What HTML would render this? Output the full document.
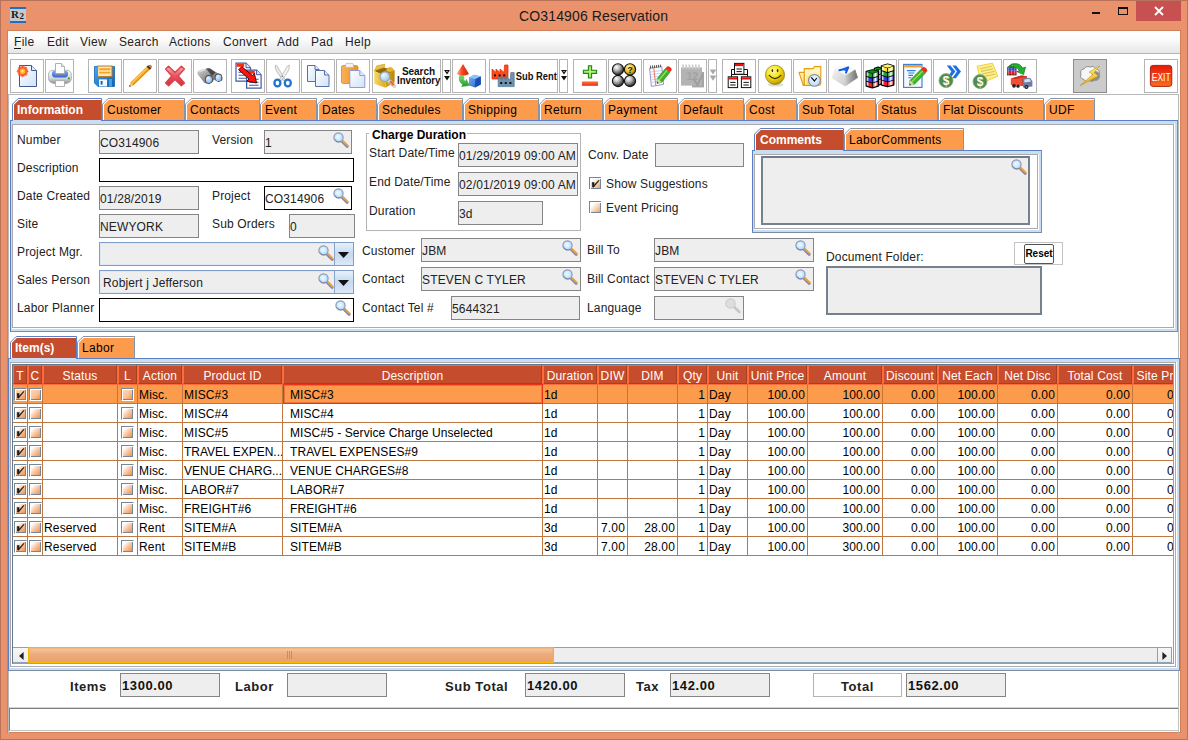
<!DOCTYPE html>
<html><head><meta charset="utf-8"><title>CO314906 Reservation</title>
<style>
html,body{margin:0;padding:0}
body{width:1188px;height:740px;position:relative;overflow:hidden;background:#E9926B;font:12px "Liberation Sans",sans-serif;color:#222}
div{position:absolute;box-sizing:border-box}
svg{position:absolute;overflow:visible}
.t{white-space:nowrap;line-height:14px;height:14px;letter-spacing:.15px}
.f{background:#EEEEEE;border:1px solid #858585;white-space:nowrap;overflow:hidden;line-height:14px;padding:5px 0 0 0;letter-spacing:.15px}
.fw{background:#fff;border:1px solid #000;white-space:nowrap;overflow:hidden;line-height:14px;padding:5px 0 0 0;letter-spacing:.15px}
.b{font-weight:bold}
.tb{background:#fff;border:1px solid #b9b9b9}
.h{color:#fff;text-align:center;background:#C54C2C;border:1px solid #FF6B3B;border-right-color:#A8401F;border-bottom-color:#A8401F;line-height:14px;padding-top:3px;white-space:nowrap;overflow:hidden;height:19px;letter-spacing:.15px}
.c{white-space:nowrap;overflow:hidden;line-height:14px;height:18px;padding-top:3px;color:#000;letter-spacing:.15px}
.r{text-align:right}
.cb{width:12px;height:12px;border:1px solid #8a8f96;border-right-color:#c9ccd0;border-bottom-color:#c9ccd0;background:linear-gradient(135deg,#fff 25%,#fbd9c0 55%,#f4a56e 100%)}
</style></head><body>

<div style="left:0px;top:0px;width:1188px;height:740px;border:1px solid #b9735a;"></div>
<div style="left:7px;top:30px;width:1174px;height:703px;border:1px solid #d2805a;background:#fff"></div>
<div style="left:10px;top:7px;width:16px;height:16px;background:#c6cacf;border-top:2px solid #1d6fc2;border-bottom:2px solid #1d6fc2;font:bold 11px 'Liberation Serif',serif;line-height:11px;color:#1a1a1a;text-align:left;padding-left:1px;letter-spacing:-.5px;overflow:hidden">R<span style="font-size:9px;position:relative;top:1px;left:1px">2</span></div>
<div class="t" style="left:519px;top:7px;font-size:14px;line-height:18px;height:18px;color:#1a1a1a;letter-spacing:.14px">CO314906 Reservation</div>
<div style="left:1092px;top:12px;width:8px;height:2px;background:#111"></div>
<div style="left:1118px;top:7px;width:10px;height:8px;border:1px solid #111;border-top:2px solid #111"></div>
<div style="left:1136px;top:1px;width:45px;height:20px;background:#C75050"></div>
<svg style="left:1154px;top:6px" width="10" height="10" viewBox="0 0 10 10"><path d="M1 1L9 9M9 1L1 9" stroke="#fff" stroke-width="1.8" fill="none"/></svg>
<div style="left:8px;top:31px;width:1172px;height:22px;background:linear-gradient(#fff,#fbfbfb 40%,#e6e6e6)"></div>
<div style="left:8px;top:53px;width:1172px;height:1px;background:#b5b5b5"></div>
<div class="t" style="left:14px;top:35px;letter-spacing:.3px">File</div>
<div class="t" style="left:47px;top:35px;letter-spacing:.3px">Edit</div>
<div class="t" style="left:80px;top:35px;letter-spacing:.3px">View</div>
<div class="t" style="left:119px;top:35px;letter-spacing:.3px">Search</div>
<div class="t" style="left:169px;top:35px;letter-spacing:.3px">Actions</div>
<div class="t" style="left:223px;top:35px;letter-spacing:.3px">Convert</div>
<div class="t" style="left:277px;top:35px;letter-spacing:.3px">Add</div>
<div class="t" style="left:311px;top:35px;letter-spacing:.3px">Pad</div>
<div class="t" style="left:345px;top:35px;letter-spacing:.3px">Help</div>
<div style="left:14px;top:48px;width:7px;height:1px;background:#1a1a1a"></div>
<div style="left:10px;top:59px;width:34px;height:34px;background:#fff;border:1px solid #b4b4b4"><svg style="left:-1px;top:-1px" width="34" height="34" viewBox="0 0 34 34"><defs><linearGradient id="g2" x1="0" y1="0" x2="1" y2="1"><stop offset="0" stop-color="#ffffff"/><stop offset="1" stop-color="#cfe2f7"/></linearGradient></defs><path d="M9.5 6.5H21.5L26.5 11.5V27.5H9.5Z" fill="url(#g2)" stroke="#44598f" stroke-width="1"/><path d="M21.5 6.5V11.5H26.5" fill="#dcecfb" stroke="#44598f" stroke-width="1"/><defs><radialGradient id="g1" cx="0.5" cy="0.5" r="0.5"><stop offset="0" stop-color="#fff27a"/><stop offset="0.45" stop-color="#ffb300"/><stop offset="0.7" stop-color="#ff3b1f"/><stop offset="1" stop-color="rgba(255,80,60,0)"/></radialGradient></defs><circle cx="12.6" cy="12.2" r="6.2" fill="url(#g1)" opacity=".75"/><path d="M19.0 12.2L15.9 13.6L17.1 16.7L14.0 15.5L12.6 18.6L11.2 15.5L8.1 16.7L9.3 13.6L6.2 12.2L9.3 10.8L8.1 7.7L11.2 8.9L12.6 5.8L14.0 8.9L17.1 7.7L15.9 10.8Z" fill="#ff4a2a" opacity=".8"/><circle cx="12.6" cy="12.2" r="2.7" fill="#ffc21a"/><circle cx="12.4" cy="12" r="1.3" fill="#fff27a"/></svg></div>
<div style="left:45px;top:59px;width:29px;height:34px;background:#fff;border:1px solid #b4b4b4"><svg style="left:-1px;top:-1px" width="29" height="34" viewBox="0 0 29 34"><defs><linearGradient id="g3" x1="0" y1="0" x2="0" y2="1"><stop offset="0" stop-color="#fdfdfd"/><stop offset="0.6" stop-color="#d5d8dc"/><stop offset="1" stop-color="#8d9298"/></linearGradient><linearGradient id="g4" x1="0" y1="0" x2="0" y2="1"><stop offset="0" stop-color="#7fb0ff"/><stop offset="1" stop-color="#2f62d8"/></linearGradient></defs><path d="M3.5 16.5Q3.2 11.4 8 11.2H21.6Q26.6 11.4 26.4 16.5V19Q26.4 23.6 21 24.5H9Q3.6 23.6 3.5 19Z" fill="url(#g3)" stroke="#9a9ea4" stroke-width=".7"/><path d="M7 14.4Q7 11.6 10 11.6H20Q23 11.6 23 14.4V15.6Q23 18.4 20 18.4H10Q7 18.4 7 15.6Z" fill="url(#g4)"/><rect x="9.6" y="14.4" width="10.8" height="2" fill="#7d86a0"/><path d="M10.5 14.6V4.5H16.5L19.5 7.5V14.6Z" fill="#fff" stroke="#a8a8a8" stroke-width=".9"/><path d="M16.5 4.5V7.5H19.5" fill="#e4e4e4" stroke="#a8a8a8" stroke-width=".8"/><circle cx="23.8" cy="19.4" r="1.1" fill="#25b02a"/><path d="M10.5 21.6H19.5V27.5H10.5Z" fill="#fff" stroke="#a9a9a9" stroke-width=".9"/></svg></div>
<div style="left:88px;top:59px;width:34px;height:34px;background:#fff;border:1px solid #b4b4b4"><svg style="left:-1px;top:-1px" width="34" height="34" viewBox="0 0 34 34"><defs><linearGradient id="g5" x1="0" y1="0" x2="1" y2="1"><stop offset="0" stop-color="#4aa8ee"/><stop offset="1" stop-color="#0d5fb8"/></linearGradient><linearGradient id="g6" x1="0" y1="0" x2="0" y2="1"><stop offset="0" stop-color="#ffd98a"/><stop offset="1" stop-color="#f7a52a"/></linearGradient></defs><path d="M6.5 7.5H26.5V27.5H10L6.5 24Z" fill="url(#g5)" stroke="#1565b5" stroke-width=".8"/><rect x="9.6" y="7" width="14.4" height="10.6" fill="#ffe7b4" stroke="#b97a22" stroke-width="1"/><path d="M11.2 10.2H22.4M11.2 13.6H22.4" stroke="#f7a226" stroke-width="1.9"/><rect x="11" y="20.4" width="8" height="7" fill="#f3f8fd"/><rect x="12.6" y="22" width="2" height="3.6" fill="#1c62c0"/><rect x="21" y="20" width="3" height="7.5" fill="#5fb4f2" opacity=".7"/></svg></div>
<div style="left:123px;top:59px;width:34px;height:34px;background:#fff;border:1px solid #b4b4b4"><svg style="left:-1px;top:-1px" width="34" height="34" viewBox="0 0 34 34"><path d="M6.4 27.6L11.6 13.4L8 24Z" fill="#cfcfcf" opacity=".7"/><path d="M6.2 27.8L7.4 23.6L24.8 6.6L28 9.6L10.4 26.6Z" fill="#F6A21C"/><path d="M8.4 24.6L25.6 7.6" stroke="#ffd057" stroke-width="1.1"/><path d="M9.8 26L27.2 9" stroke="#d9820c" stroke-width=".8"/><path d="M6.2 27.8L7.4 23.6L10.4 26.6Z" fill="#e9c9a0"/><path d="M6.2 27.8L6.7 26L8 27.3Z" fill="#333"/><path d="M23.6 7.8L26.8 10.8L28.4 9.2L25.2 6.2Z" fill="#3a3a3a"/><path d="M25.2 6.2L28.4 9.2Q29.6 7.6 28.4 6.4Q26.8 5.2 25.2 6.2Z" fill="#f4632a"/></svg></div>
<div style="left:158px;top:59px;width:34px;height:34px;background:#fff;border:1px solid #b4b4b4"><svg style="left:-1px;top:-1px" width="34" height="34" viewBox="0 0 34 34"><defs><linearGradient id="g7" x1="0" y1="0" x2="0" y2="1"><stop offset="0" stop-color="#f9b8b8"/><stop offset="0.45" stop-color="#ea5a62"/><stop offset="1" stop-color="#d62a36"/></linearGradient></defs><path d="M7.6 10L10.6 7.2L17 13.4L23.4 7.2L26.4 10L20.2 17L26.4 24L23.4 26.8L17 20.6L10.6 26.8L7.6 24L13.8 17Z" fill="url(#g7)" stroke="#d8444e" stroke-width="1.4" stroke-linejoin="round"/></svg></div>
<div style="left:193px;top:59px;width:34px;height:34px;background:#fff;border:1px solid #b4b4b4"><svg style="left:-1px;top:-1px" width="34" height="34" viewBox="0 0 34 34"><defs><linearGradient id="g8" x1="0" y1="0" x2="1" y2="1"><stop offset="0" stop-color="#d8d8d8"/><stop offset="0.5" stop-color="#8c8c8c"/><stop offset="1" stop-color="#484848"/></linearGradient><radialGradient id="g9" cx="0.35" cy="0.3" r="0.8"><stop offset="0" stop-color="#e6f3ff"/><stop offset="1" stop-color="#7fb2ea"/></radialGradient></defs><path d="M4.4 15Q4 11.6 8 10.8L13.6 9.4Q16.4 8.8 18.6 10.4L28 16Q30.4 18.6 29 21.6L25.6 23L21 20.4L19.6 23L16 25.2L11.6 24Z" fill="url(#g8)"/><path d="M13 9.6L17 9.2L22.4 13.4L19 17Z" fill="#2e2e2e" opacity=".75"/><path d="M6 12.6L12 10.6" stroke="#ececec" stroke-width="1.3" opacity=".8"/><ellipse cx="15.9" cy="20.3" rx="3.9" ry="4.3" fill="#4a4a4a"/><ellipse cx="15.9" cy="20.6" rx="3.1" ry="3.5" fill="url(#g9)"/><ellipse cx="25.5" cy="18.6" rx="3.7" ry="4.1" fill="#4a4a4a"/><ellipse cx="25.5" cy="18.9" rx="2.9" ry="3.3" fill="url(#g9)"/></svg></div>
<div style="left:231px;top:59px;width:34px;height:34px;background:#fff;border:1px solid #b4b4b4"><svg style="left:-1px;top:-1px" width="34" height="34" viewBox="0 0 34 34"><path d="M5 4.2H15L19.5 8.7V22.2H5Z" fill="#fff" stroke="#3c5aa8" stroke-width="1.2"/><rect x="5.6" y="4.8" width="7.6" height="3" fill="#ff2a12"/><path d="M15 4.2V8.7H19.5" fill="#e8eefc" stroke="#3c5aa8" stroke-width="1"/><path d="M7.5 13.2H17M7.5 16.2H17M7.5 19.2H17" stroke="#3c5aa8" stroke-width="1.1"/><path d="M15.6 11.2H25.6L30.1 15.7V29.2H15.6Z" fill="#fff" stroke="#3c5aa8" stroke-width="1.2"/><rect x="16.2" y="11.799999999999999" width="7.6" height="3" fill="#ff2a12"/><path d="M25.6 11.2V15.7H30.1" fill="#e8eefc" stroke="#3c5aa8" stroke-width="1"/><path d="M18.1 20.2H27.6M18.1 23.2H27.6M18.1 26.2H27.6" stroke="#3c5aa8" stroke-width="1.1"/><path d="M7.6 10.8L10.8 7.6L21.4 16.6L23.4 14.4L25.6 24L15.8 22.2L18 20Z" fill="#f11" stroke="#300" stroke-width=".9" stroke-linejoin="round"/></svg></div>
<div style="left:266px;top:59px;width:34px;height:34px;background:#fff;border:1px solid #b4b4b4"><svg style="left:-1px;top:-1px" width="34" height="34" viewBox="0 0 34 34"><path d="M9.4 6Q8.6 9 11 13L17.6 22L19 20.6L11.4 7.4Z" fill="#e9e9e9" stroke="#a9a9a9" stroke-width=".7"/><path d="M23.2 6Q24 9 21.6 13L15 22L13.6 20.6L21.2 7.4Z" fill="#f4f4f4" stroke="#a9a9a9" stroke-width=".7"/><circle cx="16.4" cy="17.4" r=".8" fill="#888"/><ellipse cx="11.4" cy="24" rx="3" ry="3.4" fill="none" stroke="#1f73d2" stroke-width="2.3"/><ellipse cx="21.8" cy="24" rx="3" ry="3.4" fill="none" stroke="#1f73d2" stroke-width="2.3"/></svg></div>
<div style="left:301px;top:59px;width:34px;height:34px;background:#fff;border:1px solid #b4b4b4"><svg style="left:-1px;top:-1px" width="34" height="34" viewBox="0 0 34 34"><defs><linearGradient id="g10" x1="0" y1="0" x2="1" y2="1"><stop offset="0" stop-color="#ffffff"/><stop offset="1" stop-color="#cfe2f7"/></linearGradient></defs><path d="M6.5 6.5H14.0L18.0 10.5V22.5H6.5Z" fill="url(#g10)" stroke="#5A6FA8" stroke-width="1"/><path d="M14.0 6.5V10.5H18.0" fill="#dcecfb" stroke="#5A6FA8" stroke-width="1"/><defs><linearGradient id="g11" x1="0" y1="0" x2="1" y2="1"><stop offset="0" stop-color="#ffffff"/><stop offset="1" stop-color="#cfe2f7"/></linearGradient></defs><path d="M14.5 11.5H23.5L28.0 16.0V27.5H14.5Z" fill="url(#g11)" stroke="#5A6FA8" stroke-width="1"/><path d="M23.5 11.5V16.0H28.0" fill="#dcecfb" stroke="#5A6FA8" stroke-width="1"/></svg></div>
<div style="left:336px;top:59px;width:34px;height:34px;background:#fff;border:1px solid #b4b4b4"><svg style="left:-1px;top:-1px" width="34" height="34" viewBox="0 0 34 34"><defs><linearGradient id="g12" x1="0" y1="0" x2="1" y2="0"><stop offset="0" stop-color="#f7b25a"/><stop offset="1" stop-color="#ef8f22"/></linearGradient></defs><rect x="5.5" y="6.5" width="16.5" height="18" rx="1.6" fill="url(#g12)" stroke="#d98a2a" stroke-width=".8"/><path d="M9.5 8.4V6Q9.5 4.4 11 4.4H16Q17.5 4.4 17.5 6V8.4Z" fill="#f2f2f2" stroke="#b5b5b5" stroke-width=".7"/><defs><linearGradient id="g13" x1="0" y1="0" x2="1" y2="1"><stop offset="0" stop-color="#ffffff"/><stop offset="1" stop-color="#cfe2f7"/></linearGradient></defs><path d="M13.8 11.5H23.8L28.8 16.5V28.5H13.8Z" fill="url(#g13)" stroke="#8c9be0" stroke-width="1"/><path d="M23.8 11.5V16.5H28.8" fill="#dcecfb" stroke="#8c9be0" stroke-width="1"/></svg></div>
<div style="left:372px;top:59px;width:69px;height:34px;background:#fff;border:1px solid #b4b4b4"><svg style="left:-1px;top:-1px" width="69" height="34" viewBox="0 0 69 34"><defs><linearGradient id="g14" x1="0" y1="0" x2="1" y2="1"><stop offset="0" stop-color="#f6d768"/><stop offset="1" stop-color="#b98612"/></linearGradient><radialGradient id="g15" cx="0.35" cy="0.3" r="0.8"><stop offset="0" stop-color="#f2fbff"/><stop offset="1" stop-color="#8ec5e6"/></radialGradient><linearGradient id="g16" x1="0" y1="0" x2="1" y2="0"><stop offset="0" stop-color="#f7d86a"/><stop offset="1" stop-color="#e0a81c"/></linearGradient><linearGradient id="g17" x1="0" y1="0" x2="1" y2="0"><stop offset="0" stop-color="#d9a21a"/><stop offset="1" stop-color="#b8840e"/></linearGradient></defs><path d="M2.2 12L10.4 8L22.6 11.8L13.6 17Z" fill="#8e6a0c"/><path d="M2.2 12L13.6 17V28.7L2.2 24.8Z" fill="url(#g16)"/><path d="M13.6 17L22.6 11.8V23.3L13.6 28.7Z" fill="url(#g17)"/><path d="M2.2 12L4.8 6.8L12.9 5.1L12.4 8.4L6 10.6Z" fill="#eec040" stroke="#c89212" stroke-width=".5"/><path d="M22.6 11.8L19.4 8.5L16.4 8.8L13.6 11.4L17 13.6Z" fill="#e8b42a" stroke="#c89212" stroke-width=".5"/><path d="M17 21.9L22.4 27.2" stroke="#d4d6dc" stroke-width="3.8" stroke-linecap="round"/><path d="M17.8 22.4L21.6 26.2" stroke="#f25a28" stroke-width="2.8"/><path d="M17.4 23L21.2 26.8" stroke="#f8c43a" stroke-width="1" /><circle cx="12.9" cy="17.7" r="4.9" fill="url(#g15)" stroke="#9aa4b0" stroke-width="1.2"/><text x="30" y="15.8" font-family="Liberation Sans,sans-serif" font-weight="bold" font-size="10" fill="#111" textLength="33" lengthAdjust="spacing">Search</text><text x="25" y="24.8" font-family="Liberation Sans,sans-serif" font-weight="bold" font-size="10" fill="#111" textLength="43.4" lengthAdjust="spacingAndGlyphs">Inventory</text></svg></div>
<div style="left:442px;top:59px;width:9px;height:34px;background:#fff;border:1px solid #b4b4b4"><svg style="left:-1px;top:-1px" width="9" height="34" viewBox="0 0 9 34"><path d="M2 11H8L5 15.4Z" fill="#111"/><path d="M4.2 12H5.8L5 13.2Z" fill="#fff"/><path d="M2 17H8L5 21.6Z" fill="#111"/></svg></div>
<div style="left:452px;top:59px;width:34px;height:34px;background:#fff;border:1px solid #b4b4b4"><svg style="left:-1px;top:-1px" width="34" height="34" viewBox="0 0 34 34"><defs><linearGradient id="g18" x1="0" y1="0" x2="1" y2="0"><stop offset="0" stop-color="#ffb08a"/><stop offset="0.5" stop-color="#f0401a"/><stop offset="1" stop-color="#c62a08"/></linearGradient><linearGradient id="g19" x1="0" y1="0" x2="1" y2="1"><stop offset="0" stop-color="#7db4f5"/><stop offset="1" stop-color="#1e58c8"/></linearGradient><linearGradient id="g20" x1="0" y1="0" x2="0" y2="1"><stop offset="0" stop-color="#7fe06a"/><stop offset="1" stop-color="#1f9a2c"/></linearGradient></defs><path d="M11 5L17 15Q11 18.4 4.6 15Z" fill="url(#g18)"/><path d="M8 16.4L12 18Q10.6 21 13.4 22.6L14.4 20.4L17.4 26.6L9.6 27.6L10.8 25.4Q5.6 22 8 16.4Z" fill="url(#g20)" stroke="#2a9a30" stroke-width=".5"/><path d="M17 18.4L22 15.8L28.8 17.4V25.6L23 28.6L17 26.4Z" fill="url(#g19)"/><path d="M17 18.4L22 15.8L28.8 17.4L23.4 20Z" fill="#8fc0f8"/><path d="M23.4 20L28.8 17.4V25.6L23 28.6Z" fill="#1a4db4"/></svg></div>
<div style="left:489px;top:59px;width:69px;height:34px;background:#fff;border:1px solid #b4b4b4"><svg style="left:-1px;top:-1px" width="69" height="34" viewBox="0 0 69 34"><path d="M3 20V10L7 13.4V10L11 13.4V10L15 13.4L15.6 6H19V20Z" fill="#ff4a1c" stroke="#e02a00" stroke-width=".7"/><rect x="5" y="15.4" width="2" height="2" fill="#111"/><rect x="9.6" y="15.4" width="2" height="2" fill="#111"/><rect x="14.2" y="15.4" width="2" height="2" fill="#111"/><path d="M9.2 27.6V17.6L13.2 21.0V17.6L17.2 21.0V17.6L21.2 21.0L21.799999999999997 13.6H25.2V27.6Z" fill="#6d93b0" stroke="#4c7592" stroke-width=".7"/><rect x="11.2" y="23.0" width="2" height="2" fill="#111"/><rect x="15.799999999999999" y="23.0" width="2" height="2" fill="#111"/><rect x="20.4" y="23.0" width="2" height="2" fill="#111"/><text x="26.8" y="20.8" font-family="Liberation Sans,sans-serif" font-weight="bold" font-size="10" fill="#111" textLength="41" lengthAdjust="spacingAndGlyphs">Sub Rent</text></svg></div>
<div style="left:559px;top:59px;width:9px;height:34px;background:#fff;border:1px solid #b4b4b4"><svg style="left:-1px;top:-1px" width="9" height="34" viewBox="0 0 9 34"><path d="M2 11H8L5 15.4Z" fill="#111"/><path d="M4.2 12H5.8L5 13.2Z" fill="#fff"/><path d="M2 17H8L5 21.6Z" fill="#111"/></svg></div>
<div style="left:573px;top:59px;width:34px;height:34px;background:#fff;border:1px solid #b4b4b4"><svg style="left:-1px;top:-1px" width="34" height="34" viewBox="0 0 34 34"><defs><linearGradient id="g21" x1="0" y1="0" x2="0" y2="1"><stop offset="0" stop-color="#ff7a3a"/><stop offset="1" stop-color="#ee2a12"/></linearGradient></defs><path d="M15.4 6.8H18.6V11.2H23.6V14.4H18.6V19H15.4V14.4H10.4V11.2H15.4Z" fill="#86d444" stroke="#1f8a12" stroke-width="1.1"/><path d="M16.4 7.8H17.6V12.2H22.6V13.4H17.6V18H16.4V13.4H11.4V12.2H16.4Z" fill="#d0f4a0" opacity=".85"/><rect x="9" y="22.4" width="16" height="4.4" fill="url(#g21)"/></svg></div>
<div style="left:608px;top:59px;width:34px;height:34px;background:#fff;border:1px solid #b4b4b4"><svg style="left:-1px;top:-1px" width="34" height="34" viewBox="0 0 34 34"><defs><radialGradient id="g22" cx="0.36" cy="0.3" r="0.8"><stop offset="0" stop-color="#ffffff"/><stop offset="0.35" stop-color="#bdbdbd"/><stop offset="0.75" stop-color="#4c4c4c"/><stop offset="1" stop-color="#0c0c0c"/></radialGradient><radialGradient id="g23" cx="0.38" cy="0.3" r="0.8"><stop offset="0" stop-color="#fff6b0"/><stop offset="0.5" stop-color="#f2c21a"/><stop offset="1" stop-color="#8a6200"/></radialGradient></defs><circle cx="10" cy="10.4" r="5.6" fill="url(#g22)" stroke="#141414" stroke-width="1.1"/><circle cx="22" cy="10.4" r="5.6" fill="url(#g23)" stroke="#141414" stroke-width="1.1"/><circle cx="10" cy="22" r="5.6" fill="url(#g22)" stroke="#141414" stroke-width="1.1"/><circle cx="22" cy="22" r="5.6" fill="url(#g22)" stroke="#141414" stroke-width="1.1"/><text x="22" y="13.6" text-anchor="middle" font-family="Liberation Sans,sans-serif" font-weight="bold" font-size="9" fill="#222">?</text></svg></div>
<div style="left:643px;top:59px;width:34px;height:34px;background:#fff;border:1px solid #b4b4b4"><svg style="left:-1px;top:-1px" width="34" height="34" viewBox="0 0 34 34"><path d="M6.6 9.2L18.8 7.6L20.6 25.4L8.4 27.4Z" fill="#fdfdff" stroke="#8a86c8" stroke-width=".9"/><path d="M8 13L19.4 11.4M8.3 15.6L19.6 14M8.6 18.2L19.9 16.6M8.9 20.8L20.1 19.2M9.1 23.4L20.3 21.8" stroke="#9cc4f0" stroke-width=".7"/><path d="M10.8 9L12.8 26.6" stroke="#f07a5a" stroke-width="1"/><path d="M7.6 9.6V6.6M9.6 9.3V6.4M11.6 9V6.2M13.6 8.8V6M15.6 8.5V5.8M17.6 8.2V5.6" stroke="#555" stroke-width="1"/><path d="M14.0 24.4L18.8 23.2L26.9 13.3L22.4 9.6L14.3 19.5Z" fill="#3fb52a" stroke="#1f7d18" stroke-width=".6"/><path d="M16.1 20.9L24.2 11.1" stroke="#9be36e" stroke-width="1.2"/><path d="M14.0 24.4L18.8 23.2L14.3 19.5Z" fill="#ecd2a2"/><path d="M14.0 24.4L15.7 23.7L14.3 22.6Z" fill="#333"/><path d="M26.9 13.3L28.8 11.0Q28.1 7.3 24.3 7.3L22.4 9.6Z" fill="#e8321e"/></svg></div>
<div style="left:678px;top:59px;width:29px;height:34px;background:#fff;border:1px solid #b4b4b4"><svg style="left:-1px;top:-1px" width="29" height="34" viewBox="0 0 29 34"><path d="M14 13H26V28.4H14Z" fill="#a6a6a6"/><path d="M3 8.4H24V26.6H3Z" fill="#b3b3b3"/><path d="M5 9.6V6.2M8.2 9.6V6.2M11.4 9.6V6.2M14.6 9.6V6.2M17.8 9.6V6.2M21 9.6V6.2" stroke="#cdcdcd" stroke-width="1.7" stroke-linecap="round"/><text x="8.4" y="21" font-family="Liberation Sans,sans-serif" font-weight="bold" font-size="10.5" fill="#a2a2a2">12</text><path d="M15.6 20L19.4 26L24.8 15" stroke="#9c9c9c" stroke-width="1.7" fill="none"/></svg></div>
<div style="left:708px;top:59px;width:9px;height:34px;background:#fff;border:1px solid #b4b4b4"><svg style="left:-1px;top:-1px" width="9" height="34" viewBox="0 0 9 34"><path d="M1.6 10.6H8.4L5 15.6Z" fill="#a9a9a9"/><path d="M1.6 16.6H8.4L5 21.8Z" fill="#a9a9a9"/></svg></div>
<div style="left:722px;top:59px;width:34px;height:34px;background:#fff;border:1px solid #b4b4b4"><svg style="left:-1px;top:-1px" width="34" height="34" viewBox="0 0 34 34"><path d="M12.5 10.5H9.5V18M22 10.5H25.5V18" stroke="#111" stroke-width="1" fill="none"/><path d="M9.5 15.5H25.5" stroke="#111" stroke-width="1"/><rect x="12.5" y="4.4" width="9.4" height="10.8" fill="#fff" stroke="#111" stroke-width="1"/><rect x="13.0" y="4.9" width="8.4" height="2.2" fill="#f20d0d"/><path d="M14.5 10.0H19.9M14.5 12.6H19.9" stroke="#111" stroke-width="1"/><rect x="6.2" y="17.8" width="9.4" height="10.8" fill="#fff" stroke="#111" stroke-width="1"/><rect x="6.7" y="18.3" width="8.4" height="2.2" fill="#f20d0d"/><path d="M8.2 23.4H13.600000000000001M8.2 26.0H13.600000000000001" stroke="#111" stroke-width="1"/><rect x="19.4" y="17.8" width="9.4" height="10.8" fill="#fff" stroke="#111" stroke-width="1"/><rect x="19.9" y="18.3" width="8.4" height="2.2" fill="#f20d0d"/><path d="M21.4 23.4H26.799999999999997M21.4 26.0H26.799999999999997" stroke="#111" stroke-width="1"/></svg></div>
<div style="left:758px;top:59px;width:34px;height:34px;background:#fff;border:1px solid #b4b4b4"><svg style="left:-1px;top:-1px" width="34" height="34" viewBox="0 0 34 34"><defs><radialGradient id="g24" cx="0.4" cy="0.3" r="0.75"><stop offset="0" stop-color="#fffbb0"/><stop offset="0.45" stop-color="#f6e21a"/><stop offset="0.85" stop-color="#c9a800"/><stop offset="1" stop-color="#8a7000"/></radialGradient></defs><ellipse cx="17.6" cy="25.6" rx="8" ry="2" fill="#bba" opacity=".5"/><circle cx="17" cy="15.8" r="9.6" fill="url(#g24)" stroke="#8d7a10" stroke-width=".7"/><ellipse cx="14.4" cy="11.6" rx=".8" ry="1.7" fill="#3a3000"/><ellipse cx="19.6" cy="11.6" rx=".8" ry="1.7" fill="#3a3000"/><path d="M11.2 16.4Q17 23 22.8 16.4" stroke="#3a3000" stroke-width="1.2" fill="none" stroke-linecap="round"/></svg></div>
<div style="left:793px;top:59px;width:34px;height:34px;background:#fff;border:1px solid #b4b4b4"><svg style="left:-1px;top:-1px" width="34" height="34" viewBox="0 0 34 34"><defs><linearGradient id="g25" x1="0" y1="0" x2="0" y2="1"><stop offset="0" stop-color="#fff8c8"/><stop offset="1" stop-color="#f8d64a"/></linearGradient><radialGradient id="g26" cx="0.5" cy="0.4" r="0.7"><stop offset="0" stop-color="#f2faff"/><stop offset="1" stop-color="#a9d4f4"/></radialGradient></defs><path d="M11.2 26.4V9.6H20.4L21.2 7.6H27.8V24Q27.8 26.4 25 26.4Z" fill="#fff6b8" stroke="#e79a18" stroke-width="1.1" stroke-linejoin="round"/><path d="M13.4 11.6H24V14H26.6V26H13.4Z" fill="url(#g25)" opacity=".9"/><path d="M6 13.4H11.2V26.4H10.2Z" fill="url(#g25)" stroke="#e79a18" stroke-width="1.1" stroke-linejoin="round"/><circle cx="21.4" cy="21.4" r="5.9" fill="url(#g26)" stroke="#868a9c" stroke-width="1.1"/><path d="M18.3 18.3L21.4 22L23.8 19" stroke="#111" stroke-width="1.2" fill="none"/></svg></div>
<div style="left:828px;top:59px;width:34px;height:34px;background:#fff;border:1px solid #b4b4b4"><svg style="left:-1px;top:-1px" width="34" height="34" viewBox="0 0 34 34"><defs><linearGradient id="g27" x1="0" y1="0" x2="1" y2="1"><stop offset="0" stop-color="#ffffff"/><stop offset="1" stop-color="#c8c8c8"/></linearGradient><linearGradient id="g28" x1="0" y1="0" x2="1" y2="0"><stop offset="0" stop-color="#cfcfcf"/><stop offset="1" stop-color="#6f6f6f"/></linearGradient><linearGradient id="g29" x1="0" y1="0" x2="1" y2="1"><stop offset="0" stop-color="#f2f2f2"/><stop offset="1" stop-color="#cdcdcd"/></linearGradient></defs><path d="M7 10.4L17.7 15.8L17.2 27L4.1 18.9Z" fill="url(#g29)" stroke="url(#g29)" stroke-width="1" stroke-linejoin="round"/><path d="M17.7 15.8L26.7 10.4L29.4 18.5L17.2 27Z" fill="url(#g28)" stroke="url(#g28)" stroke-width="1" stroke-linejoin="round"/><path d="M7 10.4L15 7L26.7 10.4L17.7 15.8Z" fill="#fbfbfb" stroke="#f1f1f1" stroke-width="1" stroke-linejoin="round"/><path d="M11.4 11.2Q15.4 10.8 20.2 8.4L18 13.6" stroke="#0d5be0" stroke-width="2" fill="none" stroke-linejoin="round" stroke-linecap="round"/><path d="M15.6 10.4L19 11.8" stroke="#0d5be0" stroke-width="1.5"/></svg></div>
<div style="left:863px;top:59px;width:34px;height:34px;background:#fff;border:1px solid #b4b4b4"><svg style="left:-1px;top:-1px" width="34" height="34" viewBox="0 0 34 34"><path d="M11.6 9.6L15.100000000000001 8.4L18.6 9.6V24.6L15.100000000000001 25.8L11.6 24.6Z" fill="#000" stroke="#000" stroke-width="1.8" stroke-linejoin="round"/><path d="M11.6 9.6L15.100000000000001 8.4L18.6 9.6L15.100000000000001 10.799999999999999Z" fill="#0c8a1c"/><defs><linearGradient id="g30" x1="0" y1="0" x2="1" y2="0"><stop offset="0" stop-color="#ffffff"/><stop offset="0.5" stop-color="#1aa02c"/><stop offset="1" stop-color="#1aa02c"/></linearGradient><linearGradient id="g31" x1="0" y1="0" x2="1" y2="0"><stop offset="0" stop-color="#1aa02c"/><stop offset="0.55" stop-color="#ffffff"/><stop offset="1" stop-color="#1aa02c"/></linearGradient></defs><path d="M11.9 10.1L14.700000000000001 11.299999999999999V15.399999999999999L11.9 14.2Z" fill="url(#g30)"/><path d="M15.500000000000002 11.299999999999999L18.3 10.1V14.2L15.500000000000002 15.399999999999999Z" fill="url(#g31)"/><defs><linearGradient id="g32" x1="0" y1="0" x2="1" y2="0"><stop offset="0" stop-color="#ffffff"/><stop offset="0.5" stop-color="#2a3cf0"/><stop offset="1" stop-color="#2a3cf0"/></linearGradient><linearGradient id="g33" x1="0" y1="0" x2="1" y2="0"><stop offset="0" stop-color="#2a3cf0"/><stop offset="0.55" stop-color="#ffffff"/><stop offset="1" stop-color="#2a3cf0"/></linearGradient></defs><path d="M11.9 15.1L14.700000000000001 16.3V20.4L11.9 19.2Z" fill="url(#g32)"/><path d="M15.500000000000002 16.3L18.3 15.1V19.2L15.500000000000002 20.4Z" fill="url(#g33)"/><defs><linearGradient id="g34" x1="0" y1="0" x2="1" y2="0"><stop offset="0" stop-color="#ffffff"/><stop offset="0.5" stop-color="#f02028"/><stop offset="1" stop-color="#f02028"/></linearGradient><linearGradient id="g35" x1="0" y1="0" x2="1" y2="0"><stop offset="0" stop-color="#f02028"/><stop offset="0.55" stop-color="#ffffff"/><stop offset="1" stop-color="#f02028"/></linearGradient></defs><path d="M11.9 20.1L14.700000000000001 21.3V25.4L11.9 24.200000000000003Z" fill="url(#g34)"/><path d="M15.500000000000002 21.3L18.3 20.1V24.200000000000003L15.500000000000002 25.4Z" fill="url(#g35)"/><path d="M3.4 12.6L9.299999999999999 11.0L15.2 12.6V27.0L9.299999999999999 28.6L3.4 27.0Z" fill="#000" stroke="#000" stroke-width="1.8" stroke-linejoin="round"/><path d="M3.4 12.6L9.299999999999999 11.0L15.2 12.6L9.299999999999999 14.2Z" fill="#0a8a18"/><defs><linearGradient id="g36" x1="0" y1="0" x2="1" y2="0"><stop offset="0" stop-color="#ffffff"/><stop offset="0.5" stop-color="#1aa02c"/><stop offset="1" stop-color="#1aa02c"/></linearGradient><linearGradient id="g37" x1="0" y1="0" x2="1" y2="0"><stop offset="0" stop-color="#1aa02c"/><stop offset="0.55" stop-color="#ffffff"/><stop offset="1" stop-color="#1aa02c"/></linearGradient></defs><path d="M3.6999999999999997 13.1L8.899999999999999 14.7V18.599999999999998L3.6999999999999997 17.0Z" fill="url(#g36)"/><path d="M9.7 14.7L14.899999999999999 13.1V17.0L9.7 18.599999999999998Z" fill="url(#g37)"/><defs><linearGradient id="g38" x1="0" y1="0" x2="1" y2="0"><stop offset="0" stop-color="#ffffff"/><stop offset="0.5" stop-color="#2a3cf0"/><stop offset="1" stop-color="#2a3cf0"/></linearGradient><linearGradient id="g39" x1="0" y1="0" x2="1" y2="0"><stop offset="0" stop-color="#2a3cf0"/><stop offset="0.55" stop-color="#ffffff"/><stop offset="1" stop-color="#2a3cf0"/></linearGradient></defs><path d="M3.6999999999999997 17.9L8.899999999999999 19.5V23.4L3.6999999999999997 21.799999999999997Z" fill="url(#g38)"/><path d="M9.7 19.5L14.899999999999999 17.9V21.799999999999997L9.7 23.4Z" fill="url(#g39)"/><defs><linearGradient id="g40" x1="0" y1="0" x2="1" y2="0"><stop offset="0" stop-color="#ffffff"/><stop offset="0.5" stop-color="#f02028"/><stop offset="1" stop-color="#f02028"/></linearGradient><linearGradient id="g41" x1="0" y1="0" x2="1" y2="0"><stop offset="0" stop-color="#f02028"/><stop offset="0.55" stop-color="#ffffff"/><stop offset="1" stop-color="#f02028"/></linearGradient></defs><path d="M3.6999999999999997 22.7L8.899999999999999 24.3V28.2L3.6999999999999997 26.599999999999998Z" fill="url(#g40)"/><path d="M9.7 24.3L14.899999999999999 22.7V26.599999999999998L9.7 28.2Z" fill="url(#g41)"/><path d="M18.6 7L24.6 5.3L30.6 7V25.8L24.6 27.5L18.6 25.8Z" fill="#000" stroke="#000" stroke-width="1.8" stroke-linejoin="round"/><path d="M18.6 7L24.6 5.3L30.6 7L24.6 8.7Z" fill="#fbf27a"/><defs><linearGradient id="g42" x1="0" y1="0" x2="1" y2="0"><stop offset="0" stop-color="#ffffff"/><stop offset="0.5" stop-color="#f4e436"/><stop offset="1" stop-color="#f4e436"/></linearGradient><linearGradient id="g43" x1="0" y1="0" x2="1" y2="0"><stop offset="0" stop-color="#f4e436"/><stop offset="0.55" stop-color="#ffffff"/><stop offset="1" stop-color="#f4e436"/></linearGradient></defs><path d="M18.900000000000002 7.5L24.200000000000003 9.2V13.0L18.900000000000002 11.3Z" fill="url(#g42)"/><path d="M25.0 9.2L30.3 7.5V11.3L25.0 13.0Z" fill="url(#g43)"/><defs><linearGradient id="g44" x1="0" y1="0" x2="1" y2="0"><stop offset="0" stop-color="#ffffff"/><stop offset="0.5" stop-color="#1aa02c"/><stop offset="1" stop-color="#1aa02c"/></linearGradient><linearGradient id="g45" x1="0" y1="0" x2="1" y2="0"><stop offset="0" stop-color="#1aa02c"/><stop offset="0.55" stop-color="#ffffff"/><stop offset="1" stop-color="#1aa02c"/></linearGradient></defs><path d="M18.900000000000002 12.2L24.200000000000003 13.899999999999999V17.7L18.900000000000002 16.0Z" fill="url(#g44)"/><path d="M25.0 13.899999999999999L30.3 12.2V16.0L25.0 17.7Z" fill="url(#g45)"/><defs><linearGradient id="g46" x1="0" y1="0" x2="1" y2="0"><stop offset="0" stop-color="#ffffff"/><stop offset="0.5" stop-color="#2a3cf0"/><stop offset="1" stop-color="#2a3cf0"/></linearGradient><linearGradient id="g47" x1="0" y1="0" x2="1" y2="0"><stop offset="0" stop-color="#2a3cf0"/><stop offset="0.55" stop-color="#ffffff"/><stop offset="1" stop-color="#2a3cf0"/></linearGradient></defs><path d="M18.900000000000002 16.9L24.200000000000003 18.599999999999998V22.4L18.900000000000002 20.7Z" fill="url(#g46)"/><path d="M25.0 18.599999999999998L30.3 16.9V20.7L25.0 22.4Z" fill="url(#g47)"/><defs><linearGradient id="g48" x1="0" y1="0" x2="1" y2="0"><stop offset="0" stop-color="#ffffff"/><stop offset="0.5" stop-color="#f02028"/><stop offset="1" stop-color="#f02028"/></linearGradient><linearGradient id="g49" x1="0" y1="0" x2="1" y2="0"><stop offset="0" stop-color="#f02028"/><stop offset="0.55" stop-color="#ffffff"/><stop offset="1" stop-color="#f02028"/></linearGradient></defs><path d="M18.900000000000002 21.6L24.200000000000003 23.3V27.1L18.900000000000002 25.400000000000002Z" fill="url(#g48)"/><path d="M25.0 23.3L30.3 21.6V25.400000000000002L25.0 27.1Z" fill="url(#g49)"/></svg></div>
<div style="left:898px;top:59px;width:34px;height:34px;background:#fff;border:1px solid #b4b4b4"><svg style="left:-1px;top:-1px" width="34" height="34" viewBox="0 0 34 34"><rect x="5.6" y="5.4" width="18.4" height="23" fill="#f4f9ff" stroke="#2f7fd6" stroke-width="1.1"/><rect x="6.2" y="6" width="17.2" height="2.4" fill="#ff9a2e"/><path d="M9 11.6H17.6M10.4 14H16.4M10.4 16.4H15M10.4 18.8H13.4" stroke="#2f7fd6" stroke-width="1.1"/><path d="M11.4 26.2L16.3 25.4L27.3 14.3L23.1 10.2L12.1 21.3Z" fill="#3fb52a" stroke="#1f7d18" stroke-width=".6"/><path d="M13.8 22.9L24.8 11.8" stroke="#9be36e" stroke-width="1.2"/><path d="M11.4 26.2L16.3 25.4L12.1 21.3Z" fill="#ecd2a2"/><path d="M11.4 26.2L13.2 25.7L11.9 24.4Z" fill="#333"/><path d="M27.3 14.3L29.4 12.1Q29.0 8.4 25.2 8.1L23.1 10.2Z" fill="#e8321e"/></svg></div>
<div style="left:933px;top:59px;width:34px;height:34px;background:#fff;border:1px solid #b4b4b4"><svg style="left:-1px;top:-1px" width="34" height="34" viewBox="0 0 34 34"><path d="M13.8 6.6H17.4L22.4 12.6L17.2 19.2H13.6L18.4 12.6Z" fill="#1f6fe0"/><path d="M19.4 6.6H23L28 12.6L22.8 19.2H19.2L24 12.6Z" fill="#1f6fe0"/><circle cx="13" cy="21.6" r="7" fill="#4f8d4c" stroke="#7eaa78" stroke-width=".8"/><text x="13" y="25.8" text-anchor="middle" font-family="Liberation Sans,sans-serif" font-weight="bold" font-size="12" fill="#fff">$</text></svg></div>
<div style="left:968px;top:59px;width:34px;height:34px;background:#fff;border:1px solid #b4b4b4"><svg style="left:-1px;top:-1px" width="34" height="34" viewBox="0 0 34 34"><path d="M9 7.2L24.4 4.2L29.8 17.2L18 22.2L12.6 20Z" fill="#fdf08a" stroke="#f2c82a" stroke-width=".9"/><path d="M12 9.8L24 7.2M13 12.4L25.2 9.8M14 15L26.4 12.4M15 17.6L27.4 15" stroke="#dcc45a" stroke-width="1.1"/><circle cx="12" cy="22.6" r="7" fill="#4f8d4c" stroke="#7eaa78" stroke-width=".8"/><text x="12" y="26.8" text-anchor="middle" font-family="Liberation Sans,sans-serif" font-weight="bold" font-size="12" fill="#fff">$</text></svg></div>
<div style="left:1003px;top:59px;width:34px;height:34px;background:#fff;border:1px solid #b4b4b4"><svg style="left:-1px;top:-1px" width="34" height="34" viewBox="0 0 34 34"><path d="M4 8.6L9 4.8L15.6 5.4L11 9.4Z" fill="#1d8a2a" stroke="#0c4a12" stroke-width=".5"/><ellipse cx="11" cy="6.2" rx="2" ry=".9" fill="#e8e04a"/><rect x="4" y="9.2" width="9.6" height="2.6" fill="#2a3fd0"/><rect x="4" y="11.8" width="9.6" height="2.4" fill="#e0202a"/><rect x="4" y="14.2" width="9.6" height="2.2" fill="#7a1a1a"/><path d="M5.4 9.2V16.4M8.6 9.2V16.4M11.6 9.2V16.4" stroke="#fff" stroke-width=".6" opacity=".6"/><path d="M10 5Q17 3.6 19.6 9L22.6 8L20.6 15.6L13.6 12.6L16.4 11.4Q14.6 8.2 10.6 8.4Z" fill="#22b030" stroke="#0f6a1a" stroke-width=".6"/><path d="M7.8 19.4L18.4 16.6L24 17.2V26.4L18.6 27L7.8 26Z" fill="#f0503a"/><path d="M7.8 19.4L18.4 16.6L24 17.2L13 20Z" fill="#d02a1a"/><path d="M18.6 19L24 17.2V26.4L18.6 27Z" fill="#c03a2a" opacity=".6"/><path d="M19.6 19.6L27 18.8L29.4 22V27.4L20 28.4Z" fill="#6f7aa6"/><path d="M21.4 20.4L26.4 19.8L28.2 22.6L21.4 23.4Z" fill="#cfe2fa"/><circle cx="11" cy="26.8" r="1.9" fill="#222"/><circle cx="23.4" cy="28" r="2.1" fill="#222"/><circle cx="23.4" cy="28" r=".8" fill="#aaa"/><circle cx="15" cy="27.2" r="1.6" fill="#222"/></svg></div>
<div style="left:1073px;top:59px;width:34px;height:34px;background:#cbcbcb;border:1px solid #8c8c8c"><svg style="left:-1px;top:-1px" width="34" height="34" viewBox="0 0 34 34"><defs><linearGradient id="g50" x1="0" y1="0" x2="0" y2="1"><stop offset="0" stop-color="#fff36a"/><stop offset="1" stop-color="#f2a81a"/></linearGradient></defs><path d="M8 15Q6.4 10.6 11 10Q12.6 6.6 17 8Q21 6.4 22.8 10Q27 10.6 26.4 15.4Q27.4 21.6 21.6 21.4Q19 23.4 16 21.6Q12 23 10.4 20Q6.4 19.6 8 15Z" fill="#f6f6f6" stroke="#6e6e6e" stroke-width=".7"/><path d="M20 12Q26 11.4 26.4 15.4Q27.4 21.6 21.6 21.4Q19 23.2 17 22Z" fill="#8f8f8f"/><path d="M26.5 7L16 13.1L19.9 15.3L7 26.7L25.3 17L21.1 13.6Z" fill="url(#g50)" stroke="#b8860b" stroke-width=".5" stroke-linejoin="round"/></svg></div>
<div style="left:1144px;top:59px;width:34px;height:34px;background:#fff;border:1px solid #b4b4b4"><svg style="left:-1px;top:-1px" width="34" height="34" viewBox="0 0 34 34"><defs><linearGradient id="g51" x1="0" y1="0" x2="0" y2="1"><stop offset="0" stop-color="#e21a0a"/><stop offset="1" stop-color="#ff6a1a"/></linearGradient></defs><rect x="6.4" y="6.4" width="21.4" height="21" rx="2.6" fill="url(#g51)" stroke="#a8150a" stroke-width=".9"/><text x="17.2" y="21.6" text-anchor="middle" font-family="Liberation Sans,sans-serif" font-size="10.5" fill="#fff" textLength="19" lengthAdjust="spacingAndGlyphs">EXIT</text></svg></div>
<div style="left:8px;top:94px;width:1171px;height:640px;border:1px solid #b9b9b9;border-bottom:none"></div>
<div style="left:10px;top:120px;width:1168px;height:212px;background:#C9DEF4;border:1px solid #7B8DA3;border-top-color:#5B7FC7;border-left-color:#5B7FC7"></div>
<div style="left:12px;top:124px;width:1162px;height:204px;background:#fff;border:1px solid #ababab"></div>
<div style="left:1174px;top:124px;width:1px;height:205px;background:#fff"></div>
<div style="left:12px;top:328px;width:1163px;height:1px;background:#fff"></div>
<div style="left:13px;top:120px;width:88px;height:1px;background:#C9DEF4"></div>
<svg style="left:12px;top:98px" width="90" height="22" viewBox="0 0 90 22"><path d="M0 22 V6 L6 0 H90 V22 Z" fill="#fff"/><path d="M2 22 V6.8 L6.8 2 H89 V22 Z" fill="#C54C2C"/><path d="M0.5 22 V6.2 L6.2 0.5 H89.5 V22" fill="none" stroke="#5B7FC7" stroke-width="1"/></svg>
<div class="t" style="left:17px;top:103px;color:#fff;font-weight:bold;letter-spacing:0">Information</div>
<svg style="left:102px;top:98px" width="83" height="22" viewBox="0 0 83 22"><path d="M0 22 V6 L6 0 H83 V22 Z" fill="#fff"/><path d="M2 22 V6.8 L6.8 2 H82 V22 Z" fill="#FD9B4C"/><path d="M0.5 22 V6.2 L6.2 0.5 H82.5 V22" fill="none" stroke="#8495ab" stroke-width="1"/></svg>
<div class="t" style="left:107px;top:103px;color:#000;letter-spacing:.3px">Customer</div>
<svg style="left:185px;top:98px" width="75" height="22" viewBox="0 0 75 22"><path d="M0 22 V6 L6 0 H75 V22 Z" fill="#fff"/><path d="M2 22 V6.8 L6.8 2 H74 V22 Z" fill="#FD9B4C"/><path d="M0.5 22 V6.2 L6.2 0.5 H74.5 V22" fill="none" stroke="#8495ab" stroke-width="1"/></svg>
<div class="t" style="left:190px;top:103px;color:#000;letter-spacing:.3px">Contacts</div>
<svg style="left:260px;top:98px" width="57" height="22" viewBox="0 0 57 22"><path d="M0 22 V6 L6 0 H57 V22 Z" fill="#fff"/><path d="M2 22 V6.8 L6.8 2 H56 V22 Z" fill="#FD9B4C"/><path d="M0.5 22 V6.2 L6.2 0.5 H56.5 V22" fill="none" stroke="#8495ab" stroke-width="1"/></svg>
<div class="t" style="left:265px;top:103px;color:#000;letter-spacing:.3px">Event</div>
<svg style="left:317px;top:98px" width="60" height="22" viewBox="0 0 60 22"><path d="M0 22 V6 L6 0 H60 V22 Z" fill="#fff"/><path d="M2 22 V6.8 L6.8 2 H59 V22 Z" fill="#FD9B4C"/><path d="M0.5 22 V6.2 L6.2 0.5 H59.5 V22" fill="none" stroke="#8495ab" stroke-width="1"/></svg>
<div class="t" style="left:322px;top:103px;color:#000;letter-spacing:.3px">Dates</div>
<svg style="left:377px;top:98px" width="86" height="22" viewBox="0 0 86 22"><path d="M0 22 V6 L6 0 H86 V22 Z" fill="#fff"/><path d="M2 22 V6.8 L6.8 2 H85 V22 Z" fill="#FD9B4C"/><path d="M0.5 22 V6.2 L6.2 0.5 H85.5 V22" fill="none" stroke="#8495ab" stroke-width="1"/></svg>
<div class="t" style="left:382px;top:103px;color:#000;letter-spacing:.3px">Schedules</div>
<svg style="left:463px;top:98px" width="76" height="22" viewBox="0 0 76 22"><path d="M0 22 V6 L6 0 H76 V22 Z" fill="#fff"/><path d="M2 22 V6.8 L6.8 2 H75 V22 Z" fill="#FD9B4C"/><path d="M0.5 22 V6.2 L6.2 0.5 H75.5 V22" fill="none" stroke="#8495ab" stroke-width="1"/></svg>
<div class="t" style="left:468px;top:103px;color:#000;letter-spacing:.3px">Shipping</div>
<svg style="left:539px;top:98px" width="64" height="22" viewBox="0 0 64 22"><path d="M0 22 V6 L6 0 H64 V22 Z" fill="#fff"/><path d="M2 22 V6.8 L6.8 2 H63 V22 Z" fill="#FD9B4C"/><path d="M0.5 22 V6.2 L6.2 0.5 H63.5 V22" fill="none" stroke="#8495ab" stroke-width="1"/></svg>
<div class="t" style="left:544px;top:103px;color:#000;letter-spacing:.3px">Return</div>
<svg style="left:603px;top:98px" width="75" height="22" viewBox="0 0 75 22"><path d="M0 22 V6 L6 0 H75 V22 Z" fill="#fff"/><path d="M2 22 V6.8 L6.8 2 H74 V22 Z" fill="#FD9B4C"/><path d="M0.5 22 V6.2 L6.2 0.5 H74.5 V22" fill="none" stroke="#8495ab" stroke-width="1"/></svg>
<div class="t" style="left:608px;top:103px;color:#000;letter-spacing:.3px">Payment</div>
<svg style="left:678px;top:98px" width="66" height="22" viewBox="0 0 66 22"><path d="M0 22 V6 L6 0 H66 V22 Z" fill="#fff"/><path d="M2 22 V6.8 L6.8 2 H65 V22 Z" fill="#FD9B4C"/><path d="M0.5 22 V6.2 L6.2 0.5 H65.5 V22" fill="none" stroke="#8495ab" stroke-width="1"/></svg>
<div class="t" style="left:683px;top:103px;color:#000;letter-spacing:.3px">Default</div>
<svg style="left:744px;top:98px" width="53" height="22" viewBox="0 0 53 22"><path d="M0 22 V6 L6 0 H53 V22 Z" fill="#fff"/><path d="M2 22 V6.8 L6.8 2 H52 V22 Z" fill="#FD9B4C"/><path d="M0.5 22 V6.2 L6.2 0.5 H52.5 V22" fill="none" stroke="#8495ab" stroke-width="1"/></svg>
<div class="t" style="left:749px;top:103px;color:#000;letter-spacing:.3px">Cost</div>
<svg style="left:797px;top:98px" width="79" height="22" viewBox="0 0 79 22"><path d="M0 22 V6 L6 0 H79 V22 Z" fill="#fff"/><path d="M2 22 V6.8 L6.8 2 H78 V22 Z" fill="#FD9B4C"/><path d="M0.5 22 V6.2 L6.2 0.5 H78.5 V22" fill="none" stroke="#8495ab" stroke-width="1"/></svg>
<div class="t" style="left:802px;top:103px;color:#000;letter-spacing:.3px">Sub Total</div>
<svg style="left:876px;top:98px" width="62" height="22" viewBox="0 0 62 22"><path d="M0 22 V6 L6 0 H62 V22 Z" fill="#fff"/><path d="M2 22 V6.8 L6.8 2 H61 V22 Z" fill="#FD9B4C"/><path d="M0.5 22 V6.2 L6.2 0.5 H61.5 V22" fill="none" stroke="#8495ab" stroke-width="1"/></svg>
<div class="t" style="left:881px;top:103px;color:#000;letter-spacing:.3px">Status</div>
<svg style="left:938px;top:98px" width="106" height="22" viewBox="0 0 106 22"><path d="M0 22 V6 L6 0 H106 V22 Z" fill="#fff"/><path d="M2 22 V6.8 L6.8 2 H105 V22 Z" fill="#FD9B4C"/><path d="M0.5 22 V6.2 L6.2 0.5 H105.5 V22" fill="none" stroke="#8495ab" stroke-width="1"/></svg>
<div class="t" style="left:943px;top:103px;color:#000;letter-spacing:.3px">Flat Discounts</div>
<svg style="left:1044px;top:98px" width="51" height="22" viewBox="0 0 51 22"><path d="M0 22 V6 L6 0 H51 V22 Z" fill="#fff"/><path d="M2 22 V6.8 L6.8 2 H50 V22 Z" fill="#FD9B4C"/><path d="M0.5 22 V6.2 L6.2 0.5 H50.5 V22" fill="none" stroke="#8495ab" stroke-width="1"/></svg>
<div class="t" style="left:1049px;top:103px;color:#000;letter-spacing:.3px">UDF</div>
<div class="t" style="left:17px;top:133px;">Number</div>
<div class="t" style="left:17px;top:161px;">Description</div>
<div class="t" style="left:17px;top:189px;">Date Created</div>
<div class="t" style="left:17px;top:217px;">Site</div>
<div class="t" style="left:17px;top:245px;">Project Mgr.</div>
<div class="t" style="left:17px;top:273px;">Sales Person</div>
<div class="t" style="left:17px;top:301px;">Labor Planner</div>
<div class="f" style="left:99px;top:130px;width:100px;height:24px;">CO314906</div>
<div class="fw" style="left:99px;top:158px;width:255px;height:24px;"></div>
<div class="f" style="left:99px;top:186px;width:100px;height:24px;">01/28/2019</div>
<div class="f" style="left:99px;top:214px;width:100px;height:24px;">NEWYORK</div>
<div class="t" style="left:212px;top:133px;">Version</div>
<div class="f" style="left:264px;top:130px;width:88px;height:24px;">1</div>
<svg style="left:333px;top:132px" width="16" height="16" viewBox="0 0 16 16"><defs><radialGradient id="mg" cx=".45" cy=".45" r=".6"><stop offset="0" stop-color="#f6fcff"/><stop offset=".55" stop-color="#c6eaff"/><stop offset="1" stop-color="#a2d4f8"/></radialGradient></defs><path d="M9.2 9.4L14.2 14.4" stroke="#7f86b0" stroke-width="2.8" stroke-linecap="round"/><path d="M10 9L14.8 13.6" stroke="#F5A132" stroke-width="1.9" stroke-linecap="round"/><circle cx="5.5" cy="5.4" r="4.6" fill="url(#mg)" stroke="#9496b8" stroke-width="1.2"/><path d="M2 7.4A4.2 4.2 0 0 0 8 9.4" stroke="#6f7290" stroke-width=".8" fill="none"/></svg>
<div class="t" style="left:212px;top:189px;">Project</div>
<div class="fw" style="left:264px;top:186px;width:88px;height:24px;">CO314906</div>
<svg style="left:333px;top:188px" width="16" height="16" viewBox="0 0 16 16"><defs><radialGradient id="mg" cx=".45" cy=".45" r=".6"><stop offset="0" stop-color="#f6fcff"/><stop offset=".55" stop-color="#c6eaff"/><stop offset="1" stop-color="#a2d4f8"/></radialGradient></defs><path d="M9.2 9.4L14.2 14.4" stroke="#7f86b0" stroke-width="2.8" stroke-linecap="round"/><path d="M10 9L14.8 13.6" stroke="#F5A132" stroke-width="1.9" stroke-linecap="round"/><circle cx="5.5" cy="5.4" r="4.6" fill="url(#mg)" stroke="#9496b8" stroke-width="1.2"/><path d="M2 7.4A4.2 4.2 0 0 0 8 9.4" stroke="#6f7290" stroke-width=".8" fill="none"/></svg>
<div class="t" style="left:212px;top:217px;">Sub Orders</div>
<div class="f" style="left:289px;top:214px;width:66px;height:24px;">0</div>
<div style="left:99px;top:242px;width:255px;height:24px;background:#EEEEEE;border:1px solid #7F9DC9;box-shadow:inset 0 0 0 1px #dfe8f4;line-height:14px;padding:5px 0 0 3px;white-space:nowrap;letter-spacing:.15px"></div>
<div style="left:334px;top:243px;width:19px;height:22px;background:linear-gradient(#e8f1fb,#c4d9f0 50%,#dce9f7);border-left:1px solid #8aa4c8"></div>
<svg style="left:338px;top:252px" width="11" height="6" viewBox="0 0 11 6"><path d="M0 0H11L5.5 6Z" fill="#111"/></svg>
<svg style="left:318px;top:245px" width="16" height="16" viewBox="0 0 16 16"><defs><radialGradient id="mg" cx=".45" cy=".45" r=".6"><stop offset="0" stop-color="#f6fcff"/><stop offset=".55" stop-color="#c6eaff"/><stop offset="1" stop-color="#a2d4f8"/></radialGradient></defs><path d="M9.2 9.4L14.2 14.4" stroke="#7f86b0" stroke-width="2.8" stroke-linecap="round"/><path d="M10 9L14.8 13.6" stroke="#F5A132" stroke-width="1.9" stroke-linecap="round"/><circle cx="5.5" cy="5.4" r="4.6" fill="url(#mg)" stroke="#9496b8" stroke-width="1.2"/><path d="M2 7.4A4.2 4.2 0 0 0 8 9.4" stroke="#6f7290" stroke-width=".8" fill="none"/></svg>
<div style="left:99px;top:270px;width:255px;height:24px;background:#EEEEEE;border:1px solid #7F9DC9;box-shadow:inset 0 0 0 1px #dfe8f4;line-height:14px;padding:5px 0 0 3px;white-space:nowrap;letter-spacing:.15px">Robjert j Jefferson</div>
<div style="left:334px;top:271px;width:19px;height:22px;background:linear-gradient(#e8f1fb,#c4d9f0 50%,#dce9f7);border-left:1px solid #8aa4c8"></div>
<svg style="left:338px;top:280px" width="11" height="6" viewBox="0 0 11 6"><path d="M0 0H11L5.5 6Z" fill="#111"/></svg>
<svg style="left:318px;top:273px" width="16" height="16" viewBox="0 0 16 16"><defs><radialGradient id="mg" cx=".45" cy=".45" r=".6"><stop offset="0" stop-color="#f6fcff"/><stop offset=".55" stop-color="#c6eaff"/><stop offset="1" stop-color="#a2d4f8"/></radialGradient></defs><path d="M9.2 9.4L14.2 14.4" stroke="#7f86b0" stroke-width="2.8" stroke-linecap="round"/><path d="M10 9L14.8 13.6" stroke="#F5A132" stroke-width="1.9" stroke-linecap="round"/><circle cx="5.5" cy="5.4" r="4.6" fill="url(#mg)" stroke="#9496b8" stroke-width="1.2"/><path d="M2 7.4A4.2 4.2 0 0 0 8 9.4" stroke="#6f7290" stroke-width=".8" fill="none"/></svg>
<div class="fw" style="left:99px;top:298px;width:255px;height:24px;"></div>
<svg style="left:335px;top:300px" width="16" height="16" viewBox="0 0 16 16"><defs><radialGradient id="mg" cx=".45" cy=".45" r=".6"><stop offset="0" stop-color="#f6fcff"/><stop offset=".55" stop-color="#c6eaff"/><stop offset="1" stop-color="#a2d4f8"/></radialGradient></defs><path d="M9.2 9.4L14.2 14.4" stroke="#7f86b0" stroke-width="2.8" stroke-linecap="round"/><path d="M10 9L14.8 13.6" stroke="#F5A132" stroke-width="1.9" stroke-linecap="round"/><circle cx="5.5" cy="5.4" r="4.6" fill="url(#mg)" stroke="#9496b8" stroke-width="1.2"/><path d="M2 7.4A4.2 4.2 0 0 0 8 9.4" stroke="#6f7290" stroke-width=".8" fill="none"/></svg>
<div style="left:366px;top:133px;width:215px;height:98px;border:1px solid #b4b4b4"></div>
<div style="left:369px;top:128px;width:98px;height:14px;background:#fff"></div>
<div class="t" style="left:372px;top:128px;font-weight:bold;color:#000;letter-spacing:0">Charge Duration</div>
<div class="t" style="left:369px;top:146px;">Start Date/Time</div>
<div class="f" style="left:458px;top:143px;width:120px;height:24px;">01/29/2019 09:00 AM</div>
<div class="t" style="left:369px;top:175px;">End Date/Time</div>
<div class="f" style="left:458px;top:172px;width:120px;height:24px;">02/01/2019 09:00 AM</div>
<div class="t" style="left:369px;top:204px;">Duration</div>
<div class="f" style="left:458px;top:201px;width:85px;height:24px;">3d</div>
<div class="t" style="left:588px;top:148px;">Conv. Date</div>
<div class="f" style="left:655px;top:143px;width:89px;height:24px;"></div>
<div style="left:589px;top:177px;width:12px;height:12px;background:#fff;border-left:1px solid #73879c;border-top:1px solid #73879c"><div style="left:1px;top:1px;width:10px;height:10px;border-right:1px solid #73879c;border-bottom:1px solid #73879c;background:linear-gradient(135deg,#fff 18%,#fbd3b4 58%,#f2a266 100%)"></div></div>
<svg style="left:589px;top:177px" width="13" height="13" viewBox="0 0 13 13"><path d="M3.2 5.4L5.2 5.6L4.8 8.4L9.6 3.2L10 3.8L4.6 10.2L3.4 10Z" fill="#151515" stroke="#151515" stroke-width=".5" stroke-linejoin="round"/></svg>
<div class="t" style="left:606px;top:177px;">Show Suggestions</div>
<div style="left:589px;top:201px;width:12px;height:12px;background:#fff;border-left:1px solid #73879c;border-top:1px solid #73879c"><div style="left:1px;top:1px;width:10px;height:10px;border-right:1px solid #73879c;border-bottom:1px solid #73879c;background:linear-gradient(135deg,#fff 18%,#fbd3b4 58%,#f2a266 100%)"></div></div>
<div class="t" style="left:606px;top:201px;">Event Pricing</div>
<div class="t" style="left:362px;top:244px;">Customer</div>
<div class="f" style="left:421px;top:238px;width:160px;height:24px;">JBM</div>
<svg style="left:562px;top:240px" width="16" height="16" viewBox="0 0 16 16"><defs><radialGradient id="mg" cx=".45" cy=".45" r=".6"><stop offset="0" stop-color="#f6fcff"/><stop offset=".55" stop-color="#c6eaff"/><stop offset="1" stop-color="#a2d4f8"/></radialGradient></defs><path d="M9.2 9.4L14.2 14.4" stroke="#7f86b0" stroke-width="2.8" stroke-linecap="round"/><path d="M10 9L14.8 13.6" stroke="#F5A132" stroke-width="1.9" stroke-linecap="round"/><circle cx="5.5" cy="5.4" r="4.6" fill="url(#mg)" stroke="#9496b8" stroke-width="1.2"/><path d="M2 7.4A4.2 4.2 0 0 0 8 9.4" stroke="#6f7290" stroke-width=".8" fill="none"/></svg>
<div class="t" style="left:362px;top:272px;">Contact</div>
<div class="f" style="left:421px;top:267px;width:160px;height:24px;">STEVEN C TYLER</div>
<svg style="left:562px;top:269px" width="16" height="16" viewBox="0 0 16 16"><defs><radialGradient id="mg" cx=".45" cy=".45" r=".6"><stop offset="0" stop-color="#f6fcff"/><stop offset=".55" stop-color="#c6eaff"/><stop offset="1" stop-color="#a2d4f8"/></radialGradient></defs><path d="M9.2 9.4L14.2 14.4" stroke="#7f86b0" stroke-width="2.8" stroke-linecap="round"/><path d="M10 9L14.8 13.6" stroke="#F5A132" stroke-width="1.9" stroke-linecap="round"/><circle cx="5.5" cy="5.4" r="4.6" fill="url(#mg)" stroke="#9496b8" stroke-width="1.2"/><path d="M2 7.4A4.2 4.2 0 0 0 8 9.4" stroke="#6f7290" stroke-width=".8" fill="none"/></svg>
<div class="t" style="left:362px;top:301px;">Contact Tel #</div>
<div class="f" style="left:451px;top:296px;width:129px;height:24px;">5644321</div>
<div class="t" style="left:587px;top:243px;">Bill To</div>
<div class="f" style="left:654px;top:238px;width:160px;height:24px;">JBM</div>
<svg style="left:795px;top:240px" width="16" height="16" viewBox="0 0 16 16"><defs><radialGradient id="mg" cx=".45" cy=".45" r=".6"><stop offset="0" stop-color="#f6fcff"/><stop offset=".55" stop-color="#c6eaff"/><stop offset="1" stop-color="#a2d4f8"/></radialGradient></defs><path d="M9.2 9.4L14.2 14.4" stroke="#7f86b0" stroke-width="2.8" stroke-linecap="round"/><path d="M10 9L14.8 13.6" stroke="#F5A132" stroke-width="1.9" stroke-linecap="round"/><circle cx="5.5" cy="5.4" r="4.6" fill="url(#mg)" stroke="#9496b8" stroke-width="1.2"/><path d="M2 7.4A4.2 4.2 0 0 0 8 9.4" stroke="#6f7290" stroke-width=".8" fill="none"/></svg>
<div class="t" style="left:587px;top:272px;">Bill Contact</div>
<div class="f" style="left:654px;top:267px;width:160px;height:24px;">STEVEN C TYLER</div>
<svg style="left:795px;top:269px" width="16" height="16" viewBox="0 0 16 16"><defs><radialGradient id="mg" cx=".45" cy=".45" r=".6"><stop offset="0" stop-color="#f6fcff"/><stop offset=".55" stop-color="#c6eaff"/><stop offset="1" stop-color="#a2d4f8"/></radialGradient></defs><path d="M9.2 9.4L14.2 14.4" stroke="#7f86b0" stroke-width="2.8" stroke-linecap="round"/><path d="M10 9L14.8 13.6" stroke="#F5A132" stroke-width="1.9" stroke-linecap="round"/><circle cx="5.5" cy="5.4" r="4.6" fill="url(#mg)" stroke="#9496b8" stroke-width="1.2"/><path d="M2 7.4A4.2 4.2 0 0 0 8 9.4" stroke="#6f7290" stroke-width=".8" fill="none"/></svg>
<div class="t" style="left:587px;top:301px;">Language</div>
<div class="f" style="left:654px;top:296px;width:90px;height:24px;"></div>
<svg style="left:725px;top:298px" width="16" height="16" viewBox="0 0 16 16"><path d="M9.4 9.2L14.4 14" stroke="#c6c6c6" stroke-width="2.6" stroke-linecap="round"/><circle cx="5.5" cy="5.4" r="4.6" fill="#dedede" stroke="#cbcbcb" stroke-width="1.3"/></svg>
<div style="left:752px;top:150px;width:290px;height:83px;background:#C9DEF4;border:1px solid #7B8DA3;border-top-color:#5B7FC7;border-left-color:#5B7FC7"></div>
<div style="left:754px;top:154px;width:284px;height:75px;background:#fff;border:1px solid #ababab"></div>
<div style="left:1038px;top:154px;width:1px;height:76px;background:#fff"></div>
<div style="left:754px;top:229px;width:285px;height:1px;background:#fff"></div>
<div style="left:755px;top:150px;width:88px;height:1px;background:#C9DEF4"></div>
<svg style="left:754px;top:128px" width="90" height="22" viewBox="0 0 90 22"><path d="M0 22 V6 L6 0 H90 V22 Z" fill="#fff"/><path d="M2 22 V6.8 L6.8 2 H89 V22 Z" fill="#C54C2C"/><path d="M0.5 22 V6.2 L6.2 0.5 H89.5 V22" fill="none" stroke="#5B7FC7" stroke-width="1"/></svg>
<div class="t" style="left:760px;top:133px;color:#fff;font-weight:bold;letter-spacing:0">Comments</div>
<svg style="left:844px;top:128px" width="120" height="22" viewBox="0 0 120 22"><path d="M0 22 V6 L6 0 H120 V22 Z" fill="#fff"/><path d="M2 22 V6.8 L6.8 2 H119 V22 Z" fill="#FD9B4C"/><path d="M0.5 22 V6.2 L6.2 0.5 H119.5 V22" fill="none" stroke="#8495ab" stroke-width="1"/></svg>
<div class="t" style="left:849px;top:133px;color:#000;letter-spacing:.3px">LaborComments</div>
<div style="left:761px;top:156px;width:269px;height:69px;background:#EEEEEE;border:2px solid #76818E;border-top-color:#6F7B88"></div>
<svg style="left:1011px;top:159px" width="16" height="16" viewBox="0 0 16 16"><defs><radialGradient id="mg" cx=".45" cy=".45" r=".6"><stop offset="0" stop-color="#f6fcff"/><stop offset=".55" stop-color="#c6eaff"/><stop offset="1" stop-color="#a2d4f8"/></radialGradient></defs><path d="M9.2 9.4L14.2 14.4" stroke="#7f86b0" stroke-width="2.8" stroke-linecap="round"/><path d="M10 9L14.8 13.6" stroke="#F5A132" stroke-width="1.9" stroke-linecap="round"/><circle cx="5.5" cy="5.4" r="4.6" fill="url(#mg)" stroke="#9496b8" stroke-width="1.2"/><path d="M2 7.4A4.2 4.2 0 0 0 8 9.4" stroke="#6f7290" stroke-width=".8" fill="none"/></svg>
<div class="t" style="left:826px;top:250px;">Document Folder:</div>
<div style="left:826px;top:266px;width:216px;height:49px;background:#EEEEEE;border:2px solid #76818E"></div>
<div style="left:1014px;top:242px;width:49px;height:23px;background:#fff;border:1px solid #c4c4c4"></div>
<div style="left:1024px;top:244px;width:30px;height:20px;background:#fff;border:1px solid #555;border-radius:2px;font:bold 10px 'Liberation Sans',sans-serif;line-height:18px;text-align:center;color:#000;letter-spacing:0">Reset</div>
<div style="left:8px;top:358px;width:1172px;height:313px;background:#C9DEF4;border:1px solid #7B8DA3;border-top-color:#5B7FC7;border-left-color:#5B7FC7"></div>
<div style="left:10px;top:362px;width:1166px;height:305px;background:#fff;border:1px solid #ababab"></div>
<div style="left:1176px;top:362px;width:1px;height:306px;background:#fff"></div>
<div style="left:10px;top:667px;width:1167px;height:1px;background:#fff"></div>
<div style="left:11px;top:358px;width:65px;height:1px;background:#C9DEF4"></div>
<svg style="left:10px;top:336px" width="67" height="22" viewBox="0 0 67 22"><path d="M0 22 V6 L6 0 H67 V22 Z" fill="#fff"/><path d="M2 22 V6.8 L6.8 2 H66 V22 Z" fill="#C54C2C"/><path d="M0.5 22 V6.2 L6.2 0.5 H66.5 V22" fill="none" stroke="#5B7FC7" stroke-width="1"/></svg>
<div class="t" style="left:15px;top:341px;color:#fff;font-weight:bold;letter-spacing:0">Item(s)</div>
<svg style="left:77px;top:336px" width="58" height="22" viewBox="0 0 58 22"><path d="M0 22 V6 L6 0 H58 V22 Z" fill="#fff"/><path d="M2 22 V6.8 L6.8 2 H57 V22 Z" fill="#FD9B4C"/><path d="M0.5 22 V6.2 L6.2 0.5 H57.5 V22" fill="none" stroke="#8495ab" stroke-width="1"/></svg>
<div class="t" style="left:82px;top:341px;color:#000;letter-spacing:.3px">Labor</div>
<div style="left:12px;top:364px;width:1162px;height:300px;border:1px solid #66788c;border-right-color:#8DA2B8;border-bottom-color:#8DA2B8;background:#fff"></div>
<div style="left:13px;top:365px;width:1160px;height:282px;overflow:hidden">
<div style="left:0px;top:0px;width:1160px;height:20px;background:#FF6B3B"></div>
<div class="h" style="left:0px;top:0;width:14px;">T</div>
<div class="h" style="left:15px;top:0;width:14px;">C</div>
<div class="h" style="left:30px;top:0;width:74px;">Status</div>
<div class="h" style="left:105px;top:0;width:19px;">L</div>
<div class="h" style="left:125px;top:0;width:44px;">Action</div>
<div class="h" style="left:170px;top:0;width:99px;">Product ID</div>
<div class="h" style="left:270px;top:0;width:259px;">Description</div>
<div class="h" style="left:530px;top:0;width:54px;">Duration</div>
<div class="h" style="left:585px;top:0;width:29px;">DIW</div>
<div class="h" style="left:615px;top:0;width:49px;">DIM</div>
<div class="h" style="left:665px;top:0;width:29px;">Qty</div>
<div class="h" style="left:695px;top:0;width:39px;">Unit</div>
<div class="h" style="left:735px;top:0;width:59px;">Unit Price</div>
<div class="h" style="left:795px;top:0;width:74px;">Amount</div>
<div class="h" style="left:870px;top:0;width:54px;">Discount</div>
<div class="h" style="left:925px;top:0;width:59px;">Net Each</div>
<div class="h" style="left:985px;top:0;width:59px;">Net Disc</div>
<div class="h" style="left:1045px;top:0;width:74px;">Total Cost</div>
<div class="h" style="left:1120px;top:0;width:60px;">Site Price</div>
<div style="left:0px;top:20px;width:1160px;height:18px;background:#FD9B4C"></div>
<div style="left:0px;top:38px;width:1160px;height:1px;background:#BF7741"></div>
<div class="c" style="left:126px;top:20px;width:43px;">Misc.</div>
<div class="c" style="left:171px;top:20px;width:98px;">MISC#3</div>
<div class="c" style="left:277px;top:20px;width:252px;letter-spacing:.08px;">MISC#3</div>
<div class="c" style="left:531px;top:20px;width:53px;">1d</div>
<div class="c r" style="left:665px;top:20px;width:27px;">1</div>
<div class="c" style="left:696px;top:20px;width:38px;">Day</div>
<div class="c r" style="left:735px;top:20px;width:57px;">100.00</div>
<div class="c r" style="left:795px;top:20px;width:72px;">100.00</div>
<div class="c r" style="left:870px;top:20px;width:52px;">0.00</div>
<div class="c r" style="left:925px;top:20px;width:57px;">100.00</div>
<div class="c r" style="left:985px;top:20px;width:57px;">0.00</div>
<div class="c r" style="left:1045px;top:20px;width:72px;">0.00</div>
<div class="c r" style="left:1120px;top:20px;width:58px;">0.00</div>
<div style="left:1px;top:23px;width:13px;height:13px;background:#fff;border:1px solid #73879c;border-right-color:#fff;border-bottom-color:#fff"><div style="left:1px;top:1px;width:10px;height:10px;border-right:1px solid #73879c;border-bottom:1px solid #73879c;background:linear-gradient(135deg,#fcd3ae 12%,#f9c29a 55%,#f0924a 100%)"></div></div>
<div style="left:16px;top:23px;width:13px;height:13px;background:#fff;border:1px solid #73879c;border-right-color:#fff;border-bottom-color:#fff"><div style="left:1px;top:1px;width:10px;height:10px;border-right:1px solid #73879c;border-bottom:1px solid #73879c;background:linear-gradient(135deg,#fcd3ae 12%,#f9c29a 55%,#f0924a 100%)"></div></div>
<div style="left:108px;top:23px;width:13px;height:13px;background:#fff;border:1px solid #73879c;border-right-color:#fff;border-bottom-color:#fff"><div style="left:1px;top:1px;width:10px;height:10px;border-right:1px solid #73879c;border-bottom:1px solid #73879c;background:linear-gradient(135deg,#fcd3ae 12%,#f9c29a 55%,#f0924a 100%)"></div></div>
<svg style="left:1px;top:23px" width="13" height="13" viewBox="0 0 13 13"><path d="M3.2 5.4L5.2 5.6L4.8 8.4L9.6 3.2L10 3.8L4.6 10.2L3.4 10Z" fill="#151515" stroke="#151515" stroke-width=".5" stroke-linejoin="round"/></svg>
<div style="left:0px;top:57px;width:1160px;height:1px;background:#BF7741"></div>
<div class="c" style="left:126px;top:39px;width:43px;">Misc.</div>
<div class="c" style="left:171px;top:39px;width:98px;">MISC#4</div>
<div class="c" style="left:277px;top:39px;width:252px;letter-spacing:.08px;">MISC#4</div>
<div class="c" style="left:531px;top:39px;width:53px;">1d</div>
<div class="c r" style="left:665px;top:39px;width:27px;">1</div>
<div class="c" style="left:696px;top:39px;width:38px;">Day</div>
<div class="c r" style="left:735px;top:39px;width:57px;">100.00</div>
<div class="c r" style="left:795px;top:39px;width:72px;">100.00</div>
<div class="c r" style="left:870px;top:39px;width:52px;">0.00</div>
<div class="c r" style="left:925px;top:39px;width:57px;">100.00</div>
<div class="c r" style="left:985px;top:39px;width:57px;">0.00</div>
<div class="c r" style="left:1045px;top:39px;width:72px;">0.00</div>
<div class="c r" style="left:1120px;top:39px;width:58px;">0.00</div>
<div style="left:1px;top:42px;width:13px;height:13px;background:#fff;border:1px solid #73879c;border-right-color:#fff;border-bottom-color:#fff"><div style="left:1px;top:1px;width:10px;height:10px;border-right:1px solid #73879c;border-bottom:1px solid #73879c;background:linear-gradient(135deg,#ffffff 12%,#f9c29a 55%,#f0924a 100%)"></div></div>
<div style="left:16px;top:42px;width:13px;height:13px;background:#fff;border:1px solid #73879c;border-right-color:#fff;border-bottom-color:#fff"><div style="left:1px;top:1px;width:10px;height:10px;border-right:1px solid #73879c;border-bottom:1px solid #73879c;background:linear-gradient(135deg,#ffffff 12%,#f9c29a 55%,#f0924a 100%)"></div></div>
<div style="left:108px;top:42px;width:13px;height:13px;background:#fff;border:1px solid #73879c;border-right-color:#fff;border-bottom-color:#fff"><div style="left:1px;top:1px;width:10px;height:10px;border-right:1px solid #73879c;border-bottom:1px solid #73879c;background:linear-gradient(135deg,#ffffff 12%,#f9c29a 55%,#f0924a 100%)"></div></div>
<svg style="left:1px;top:42px" width="13" height="13" viewBox="0 0 13 13"><path d="M3.2 5.4L5.2 5.6L4.8 8.4L9.6 3.2L10 3.8L4.6 10.2L3.4 10Z" fill="#151515" stroke="#151515" stroke-width=".5" stroke-linejoin="round"/></svg>
<div style="left:0px;top:76px;width:1160px;height:1px;background:#BF7741"></div>
<div class="c" style="left:126px;top:58px;width:43px;">Misc.</div>
<div class="c" style="left:171px;top:58px;width:98px;">MISC#5</div>
<div class="c" style="left:277px;top:58px;width:252px;letter-spacing:.08px;">MISC#5 - Service Charge Unselected</div>
<div class="c" style="left:531px;top:58px;width:53px;">1d</div>
<div class="c r" style="left:665px;top:58px;width:27px;">1</div>
<div class="c" style="left:696px;top:58px;width:38px;">Day</div>
<div class="c r" style="left:735px;top:58px;width:57px;">100.00</div>
<div class="c r" style="left:795px;top:58px;width:72px;">100.00</div>
<div class="c r" style="left:870px;top:58px;width:52px;">0.00</div>
<div class="c r" style="left:925px;top:58px;width:57px;">100.00</div>
<div class="c r" style="left:985px;top:58px;width:57px;">0.00</div>
<div class="c r" style="left:1045px;top:58px;width:72px;">0.00</div>
<div class="c r" style="left:1120px;top:58px;width:58px;">0.00</div>
<div style="left:1px;top:61px;width:13px;height:13px;background:#fff;border:1px solid #73879c;border-right-color:#fff;border-bottom-color:#fff"><div style="left:1px;top:1px;width:10px;height:10px;border-right:1px solid #73879c;border-bottom:1px solid #73879c;background:linear-gradient(135deg,#ffffff 12%,#f9c29a 55%,#f0924a 100%)"></div></div>
<div style="left:16px;top:61px;width:13px;height:13px;background:#fff;border:1px solid #73879c;border-right-color:#fff;border-bottom-color:#fff"><div style="left:1px;top:1px;width:10px;height:10px;border-right:1px solid #73879c;border-bottom:1px solid #73879c;background:linear-gradient(135deg,#ffffff 12%,#f9c29a 55%,#f0924a 100%)"></div></div>
<div style="left:108px;top:61px;width:13px;height:13px;background:#fff;border:1px solid #73879c;border-right-color:#fff;border-bottom-color:#fff"><div style="left:1px;top:1px;width:10px;height:10px;border-right:1px solid #73879c;border-bottom:1px solid #73879c;background:linear-gradient(135deg,#ffffff 12%,#f9c29a 55%,#f0924a 100%)"></div></div>
<svg style="left:1px;top:61px" width="13" height="13" viewBox="0 0 13 13"><path d="M3.2 5.4L5.2 5.6L4.8 8.4L9.6 3.2L10 3.8L4.6 10.2L3.4 10Z" fill="#151515" stroke="#151515" stroke-width=".5" stroke-linejoin="round"/></svg>
<div style="left:0px;top:95px;width:1160px;height:1px;background:#BF7741"></div>
<div class="c" style="left:126px;top:77px;width:43px;">Misc.</div>
<div class="c" style="left:171px;top:77px;width:98px;letter-spacing:0;">TRAVEL EXPEN...</div>
<div class="c" style="left:277px;top:77px;width:252px;letter-spacing:.08px;">TRAVEL EXPENSES#9</div>
<div class="c" style="left:531px;top:77px;width:53px;">1d</div>
<div class="c r" style="left:665px;top:77px;width:27px;">1</div>
<div class="c" style="left:696px;top:77px;width:38px;">Day</div>
<div class="c r" style="left:735px;top:77px;width:57px;">100.00</div>
<div class="c r" style="left:795px;top:77px;width:72px;">100.00</div>
<div class="c r" style="left:870px;top:77px;width:52px;">0.00</div>
<div class="c r" style="left:925px;top:77px;width:57px;">100.00</div>
<div class="c r" style="left:985px;top:77px;width:57px;">0.00</div>
<div class="c r" style="left:1045px;top:77px;width:72px;">0.00</div>
<div class="c r" style="left:1120px;top:77px;width:58px;">0.00</div>
<div style="left:1px;top:80px;width:13px;height:13px;background:#fff;border:1px solid #73879c;border-right-color:#fff;border-bottom-color:#fff"><div style="left:1px;top:1px;width:10px;height:10px;border-right:1px solid #73879c;border-bottom:1px solid #73879c;background:linear-gradient(135deg,#ffffff 12%,#f9c29a 55%,#f0924a 100%)"></div></div>
<div style="left:16px;top:80px;width:13px;height:13px;background:#fff;border:1px solid #73879c;border-right-color:#fff;border-bottom-color:#fff"><div style="left:1px;top:1px;width:10px;height:10px;border-right:1px solid #73879c;border-bottom:1px solid #73879c;background:linear-gradient(135deg,#ffffff 12%,#f9c29a 55%,#f0924a 100%)"></div></div>
<div style="left:108px;top:80px;width:13px;height:13px;background:#fff;border:1px solid #73879c;border-right-color:#fff;border-bottom-color:#fff"><div style="left:1px;top:1px;width:10px;height:10px;border-right:1px solid #73879c;border-bottom:1px solid #73879c;background:linear-gradient(135deg,#ffffff 12%,#f9c29a 55%,#f0924a 100%)"></div></div>
<svg style="left:1px;top:80px" width="13" height="13" viewBox="0 0 13 13"><path d="M3.2 5.4L5.2 5.6L4.8 8.4L9.6 3.2L10 3.8L4.6 10.2L3.4 10Z" fill="#151515" stroke="#151515" stroke-width=".5" stroke-linejoin="round"/></svg>
<div style="left:0px;top:114px;width:1160px;height:1px;background:#BF7741"></div>
<div class="c" style="left:126px;top:96px;width:43px;">Misc.</div>
<div class="c" style="left:171px;top:96px;width:98px;letter-spacing:0;">VENUE CHARG...</div>
<div class="c" style="left:277px;top:96px;width:252px;letter-spacing:.08px;">VENUE CHARGES#8</div>
<div class="c" style="left:531px;top:96px;width:53px;">1d</div>
<div class="c r" style="left:665px;top:96px;width:27px;">1</div>
<div class="c" style="left:696px;top:96px;width:38px;">Day</div>
<div class="c r" style="left:735px;top:96px;width:57px;">100.00</div>
<div class="c r" style="left:795px;top:96px;width:72px;">100.00</div>
<div class="c r" style="left:870px;top:96px;width:52px;">0.00</div>
<div class="c r" style="left:925px;top:96px;width:57px;">100.00</div>
<div class="c r" style="left:985px;top:96px;width:57px;">0.00</div>
<div class="c r" style="left:1045px;top:96px;width:72px;">0.00</div>
<div class="c r" style="left:1120px;top:96px;width:58px;">0.00</div>
<div style="left:1px;top:99px;width:13px;height:13px;background:#fff;border:1px solid #73879c;border-right-color:#fff;border-bottom-color:#fff"><div style="left:1px;top:1px;width:10px;height:10px;border-right:1px solid #73879c;border-bottom:1px solid #73879c;background:linear-gradient(135deg,#ffffff 12%,#f9c29a 55%,#f0924a 100%)"></div></div>
<div style="left:16px;top:99px;width:13px;height:13px;background:#fff;border:1px solid #73879c;border-right-color:#fff;border-bottom-color:#fff"><div style="left:1px;top:1px;width:10px;height:10px;border-right:1px solid #73879c;border-bottom:1px solid #73879c;background:linear-gradient(135deg,#ffffff 12%,#f9c29a 55%,#f0924a 100%)"></div></div>
<div style="left:108px;top:99px;width:13px;height:13px;background:#fff;border:1px solid #73879c;border-right-color:#fff;border-bottom-color:#fff"><div style="left:1px;top:1px;width:10px;height:10px;border-right:1px solid #73879c;border-bottom:1px solid #73879c;background:linear-gradient(135deg,#ffffff 12%,#f9c29a 55%,#f0924a 100%)"></div></div>
<svg style="left:1px;top:99px" width="13" height="13" viewBox="0 0 13 13"><path d="M3.2 5.4L5.2 5.6L4.8 8.4L9.6 3.2L10 3.8L4.6 10.2L3.4 10Z" fill="#151515" stroke="#151515" stroke-width=".5" stroke-linejoin="round"/></svg>
<div style="left:0px;top:133px;width:1160px;height:1px;background:#BF7741"></div>
<div class="c" style="left:126px;top:115px;width:43px;">Misc.</div>
<div class="c" style="left:171px;top:115px;width:98px;">LABOR#7</div>
<div class="c" style="left:277px;top:115px;width:252px;letter-spacing:.08px;">LABOR#7</div>
<div class="c" style="left:531px;top:115px;width:53px;">1d</div>
<div class="c r" style="left:665px;top:115px;width:27px;">1</div>
<div class="c" style="left:696px;top:115px;width:38px;">Day</div>
<div class="c r" style="left:735px;top:115px;width:57px;">100.00</div>
<div class="c r" style="left:795px;top:115px;width:72px;">100.00</div>
<div class="c r" style="left:870px;top:115px;width:52px;">0.00</div>
<div class="c r" style="left:925px;top:115px;width:57px;">100.00</div>
<div class="c r" style="left:985px;top:115px;width:57px;">0.00</div>
<div class="c r" style="left:1045px;top:115px;width:72px;">0.00</div>
<div class="c r" style="left:1120px;top:115px;width:58px;">0.00</div>
<div style="left:1px;top:118px;width:13px;height:13px;background:#fff;border:1px solid #73879c;border-right-color:#fff;border-bottom-color:#fff"><div style="left:1px;top:1px;width:10px;height:10px;border-right:1px solid #73879c;border-bottom:1px solid #73879c;background:linear-gradient(135deg,#ffffff 12%,#f9c29a 55%,#f0924a 100%)"></div></div>
<div style="left:16px;top:118px;width:13px;height:13px;background:#fff;border:1px solid #73879c;border-right-color:#fff;border-bottom-color:#fff"><div style="left:1px;top:1px;width:10px;height:10px;border-right:1px solid #73879c;border-bottom:1px solid #73879c;background:linear-gradient(135deg,#ffffff 12%,#f9c29a 55%,#f0924a 100%)"></div></div>
<div style="left:108px;top:118px;width:13px;height:13px;background:#fff;border:1px solid #73879c;border-right-color:#fff;border-bottom-color:#fff"><div style="left:1px;top:1px;width:10px;height:10px;border-right:1px solid #73879c;border-bottom:1px solid #73879c;background:linear-gradient(135deg,#ffffff 12%,#f9c29a 55%,#f0924a 100%)"></div></div>
<svg style="left:1px;top:118px" width="13" height="13" viewBox="0 0 13 13"><path d="M3.2 5.4L5.2 5.6L4.8 8.4L9.6 3.2L10 3.8L4.6 10.2L3.4 10Z" fill="#151515" stroke="#151515" stroke-width=".5" stroke-linejoin="round"/></svg>
<div style="left:0px;top:152px;width:1160px;height:1px;background:#BF7741"></div>
<div class="c" style="left:126px;top:134px;width:43px;">Misc.</div>
<div class="c" style="left:171px;top:134px;width:98px;">FREIGHT#6</div>
<div class="c" style="left:277px;top:134px;width:252px;letter-spacing:.08px;">FREIGHT#6</div>
<div class="c" style="left:531px;top:134px;width:53px;">1d</div>
<div class="c r" style="left:665px;top:134px;width:27px;">1</div>
<div class="c" style="left:696px;top:134px;width:38px;">Day</div>
<div class="c r" style="left:735px;top:134px;width:57px;">100.00</div>
<div class="c r" style="left:795px;top:134px;width:72px;">100.00</div>
<div class="c r" style="left:870px;top:134px;width:52px;">0.00</div>
<div class="c r" style="left:925px;top:134px;width:57px;">100.00</div>
<div class="c r" style="left:985px;top:134px;width:57px;">0.00</div>
<div class="c r" style="left:1045px;top:134px;width:72px;">0.00</div>
<div class="c r" style="left:1120px;top:134px;width:58px;">0.00</div>
<div style="left:1px;top:137px;width:13px;height:13px;background:#fff;border:1px solid #73879c;border-right-color:#fff;border-bottom-color:#fff"><div style="left:1px;top:1px;width:10px;height:10px;border-right:1px solid #73879c;border-bottom:1px solid #73879c;background:linear-gradient(135deg,#ffffff 12%,#f9c29a 55%,#f0924a 100%)"></div></div>
<div style="left:16px;top:137px;width:13px;height:13px;background:#fff;border:1px solid #73879c;border-right-color:#fff;border-bottom-color:#fff"><div style="left:1px;top:1px;width:10px;height:10px;border-right:1px solid #73879c;border-bottom:1px solid #73879c;background:linear-gradient(135deg,#ffffff 12%,#f9c29a 55%,#f0924a 100%)"></div></div>
<div style="left:108px;top:137px;width:13px;height:13px;background:#fff;border:1px solid #73879c;border-right-color:#fff;border-bottom-color:#fff"><div style="left:1px;top:1px;width:10px;height:10px;border-right:1px solid #73879c;border-bottom:1px solid #73879c;background:linear-gradient(135deg,#ffffff 12%,#f9c29a 55%,#f0924a 100%)"></div></div>
<svg style="left:1px;top:137px" width="13" height="13" viewBox="0 0 13 13"><path d="M3.2 5.4L5.2 5.6L4.8 8.4L9.6 3.2L10 3.8L4.6 10.2L3.4 10Z" fill="#151515" stroke="#151515" stroke-width=".5" stroke-linejoin="round"/></svg>
<div style="left:0px;top:171px;width:1160px;height:1px;background:#BF7741"></div>
<div class="c" style="left:31px;top:153px;width:73px;">Reserved</div>
<div class="c" style="left:126px;top:153px;width:43px;">Rent</div>
<div class="c" style="left:171px;top:153px;width:98px;">SITEM#A</div>
<div class="c" style="left:277px;top:153px;width:252px;letter-spacing:.08px;">SITEM#A</div>
<div class="c" style="left:531px;top:153px;width:53px;">3d</div>
<div class="c r" style="left:585px;top:153px;width:27px;">7.00</div>
<div class="c r" style="left:615px;top:153px;width:47px;">28.00</div>
<div class="c r" style="left:665px;top:153px;width:27px;">1</div>
<div class="c" style="left:696px;top:153px;width:38px;">Day</div>
<div class="c r" style="left:735px;top:153px;width:57px;">100.00</div>
<div class="c r" style="left:795px;top:153px;width:72px;">300.00</div>
<div class="c r" style="left:870px;top:153px;width:52px;">0.00</div>
<div class="c r" style="left:925px;top:153px;width:57px;">100.00</div>
<div class="c r" style="left:985px;top:153px;width:57px;">0.00</div>
<div class="c r" style="left:1045px;top:153px;width:72px;">0.00</div>
<div class="c r" style="left:1120px;top:153px;width:58px;">0.00</div>
<div style="left:1px;top:156px;width:13px;height:13px;background:#fff;border:1px solid #73879c;border-right-color:#fff;border-bottom-color:#fff"><div style="left:1px;top:1px;width:10px;height:10px;border-right:1px solid #73879c;border-bottom:1px solid #73879c;background:linear-gradient(135deg,#ffffff 12%,#f9c29a 55%,#f0924a 100%)"></div></div>
<div style="left:16px;top:156px;width:13px;height:13px;background:#fff;border:1px solid #73879c;border-right-color:#fff;border-bottom-color:#fff"><div style="left:1px;top:1px;width:10px;height:10px;border-right:1px solid #73879c;border-bottom:1px solid #73879c;background:linear-gradient(135deg,#ffffff 12%,#f9c29a 55%,#f0924a 100%)"></div></div>
<div style="left:108px;top:156px;width:13px;height:13px;background:#fff;border:1px solid #73879c;border-right-color:#fff;border-bottom-color:#fff"><div style="left:1px;top:1px;width:10px;height:10px;border-right:1px solid #73879c;border-bottom:1px solid #73879c;background:linear-gradient(135deg,#ffffff 12%,#f9c29a 55%,#f0924a 100%)"></div></div>
<svg style="left:1px;top:156px" width="13" height="13" viewBox="0 0 13 13"><path d="M3.2 5.4L5.2 5.6L4.8 8.4L9.6 3.2L10 3.8L4.6 10.2L3.4 10Z" fill="#151515" stroke="#151515" stroke-width=".5" stroke-linejoin="round"/></svg>
<div style="left:0px;top:190px;width:1160px;height:1px;background:#BF7741"></div>
<div class="c" style="left:31px;top:172px;width:73px;">Reserved</div>
<div class="c" style="left:126px;top:172px;width:43px;">Rent</div>
<div class="c" style="left:171px;top:172px;width:98px;">SITEM#B</div>
<div class="c" style="left:277px;top:172px;width:252px;letter-spacing:.08px;">SITEM#B</div>
<div class="c" style="left:531px;top:172px;width:53px;">3d</div>
<div class="c r" style="left:585px;top:172px;width:27px;">7.00</div>
<div class="c r" style="left:615px;top:172px;width:47px;">28.00</div>
<div class="c r" style="left:665px;top:172px;width:27px;">1</div>
<div class="c" style="left:696px;top:172px;width:38px;">Day</div>
<div class="c r" style="left:735px;top:172px;width:57px;">100.00</div>
<div class="c r" style="left:795px;top:172px;width:72px;">300.00</div>
<div class="c r" style="left:870px;top:172px;width:52px;">0.00</div>
<div class="c r" style="left:925px;top:172px;width:57px;">100.00</div>
<div class="c r" style="left:985px;top:172px;width:57px;">0.00</div>
<div class="c r" style="left:1045px;top:172px;width:72px;">0.00</div>
<div class="c r" style="left:1120px;top:172px;width:58px;">0.00</div>
<div style="left:1px;top:175px;width:13px;height:13px;background:#fff;border:1px solid #73879c;border-right-color:#fff;border-bottom-color:#fff"><div style="left:1px;top:1px;width:10px;height:10px;border-right:1px solid #73879c;border-bottom:1px solid #73879c;background:linear-gradient(135deg,#ffffff 12%,#f9c29a 55%,#f0924a 100%)"></div></div>
<div style="left:16px;top:175px;width:13px;height:13px;background:#fff;border:1px solid #73879c;border-right-color:#fff;border-bottom-color:#fff"><div style="left:1px;top:1px;width:10px;height:10px;border-right:1px solid #73879c;border-bottom:1px solid #73879c;background:linear-gradient(135deg,#ffffff 12%,#f9c29a 55%,#f0924a 100%)"></div></div>
<div style="left:108px;top:175px;width:13px;height:13px;background:#fff;border:1px solid #73879c;border-right-color:#fff;border-bottom-color:#fff"><div style="left:1px;top:1px;width:10px;height:10px;border-right:1px solid #73879c;border-bottom:1px solid #73879c;background:linear-gradient(135deg,#ffffff 12%,#f9c29a 55%,#f0924a 100%)"></div></div>
<svg style="left:1px;top:175px" width="13" height="13" viewBox="0 0 13 13"><path d="M3.2 5.4L5.2 5.6L4.8 8.4L9.6 3.2L10 3.8L4.6 10.2L3.4 10Z" fill="#151515" stroke="#151515" stroke-width=".5" stroke-linejoin="round"/></svg>
<div style="left:14px;top:20px;width:1px;height:171px;background:#BF7741"></div>
<div style="left:29px;top:20px;width:1px;height:171px;background:#BF7741"></div>
<div style="left:104px;top:20px;width:1px;height:171px;background:#BF7741"></div>
<div style="left:124px;top:20px;width:1px;height:171px;background:#BF7741"></div>
<div style="left:169px;top:20px;width:1px;height:171px;background:#BF7741"></div>
<div style="left:269px;top:20px;width:1px;height:171px;background:#BF7741"></div>
<div style="left:529px;top:20px;width:1px;height:171px;background:#BF7741"></div>
<div style="left:584px;top:20px;width:1px;height:171px;background:#BF7741"></div>
<div style="left:614px;top:20px;width:1px;height:171px;background:#BF7741"></div>
<div style="left:664px;top:20px;width:1px;height:171px;background:#BF7741"></div>
<div style="left:694px;top:20px;width:1px;height:171px;background:#BF7741"></div>
<div style="left:734px;top:20px;width:1px;height:171px;background:#BF7741"></div>
<div style="left:794px;top:20px;width:1px;height:171px;background:#BF7741"></div>
<div style="left:869px;top:20px;width:1px;height:171px;background:#BF7741"></div>
<div style="left:924px;top:20px;width:1px;height:171px;background:#BF7741"></div>
<div style="left:984px;top:20px;width:1px;height:171px;background:#BF7741"></div>
<div style="left:1044px;top:20px;width:1px;height:171px;background:#BF7741"></div>
<div style="left:1119px;top:20px;width:1px;height:171px;background:#BF7741"></div>
<div style="left:270px;top:19px;width:260px;height:20px;border:1px solid #E8331C;box-shadow:inset 0 0 0 1px rgba(232,80,40,.55)"></div>
</div>
<div style="left:13px;top:647px;width:1160px;height:16px;background:#EEEEEE;border-top:1px solid #8DA2B8;border-bottom:1px solid #8DA2B8"></div>
<div style="left:13px;top:647px;width:15px;height:16px;background:linear-gradient(#f6f6f6,#ececec);border-top:1px solid #8DA2B8;border-bottom:1px solid #8DA2B8"></div>
<svg style="left:19px;top:652px" width="5" height="8" viewBox="0 0 5 8"><path d="M4.6 0V8L0 4Z" fill="#222"/></svg>
<div style="left:1157px;top:647px;width:15px;height:16px;background:linear-gradient(#f6f6f6,#ececec);border:1px solid #8DA2B8"></div>
<svg style="left:1162px;top:652px" width="5" height="8" viewBox="0 0 5 8"><path d="M0.4 0V8L5 4Z" fill="#222"/></svg>
<div style="left:1172px;top:647px;width:1px;height:16px;background:#fff"></div>
<div style="left:28px;top:647px;width:526px;height:16px;background:linear-gradient(#F2C8A8,#ECAC7C 45%,#E8A06C);border:1px solid #F9B800;box-shadow:inset 0 0 0 1px rgba(240,170,90,.5)"></div>
<div style="left:287px;top:651px;width:1px;height:8px;background:#c08e70"></div>
<div style="left:289px;top:651px;width:1px;height:8px;background:#c08e70"></div>
<div style="left:291px;top:651px;width:1px;height:8px;background:#c08e70"></div>
<div class="t" style="left:70px;top:680px;font-weight:bold;font-size:13px;letter-spacing:.55px;color:#222">Items</div>
<div class="f" style="left:120px;top:673px;width:100px;height:24px;font-weight:bold;font-size:13px;padding:5px 0 0 1px;color:#111;letter-spacing:.6px">1300.00</div>
<div class="t" style="left:235px;top:680px;font-weight:bold;font-size:13px;letter-spacing:.55px;color:#222">Labor</div>
<div class="f" style="left:287px;top:673px;width:100px;height:24px;font-weight:bold;font-size:13px;padding:5px 0 0 1px;color:#111;letter-spacing:.6px"></div>
<div class="t" style="left:445px;top:680px;font-weight:bold;font-size:13px;letter-spacing:.55px;color:#222">Sub Total</div>
<div class="f" style="left:525px;top:673px;width:100px;height:24px;font-weight:bold;font-size:13px;padding:5px 0 0 1px;color:#111;letter-spacing:.6px">1420.00</div>
<div class="t" style="left:636px;top:680px;font-weight:bold;font-size:13px;letter-spacing:.55px;color:#222">Tax</div>
<div class="f" style="left:670px;top:673px;width:100px;height:24px;font-weight:bold;font-size:13px;padding:5px 0 0 1px;color:#111;letter-spacing:.6px">142.00</div>
<div style="left:813px;top:673px;width:89px;height:24px;background:#fff;border:1px solid #b4b4b4"></div>
<div class="t" style="left:841px;top:680px;font-weight:bold;font-size:13px;letter-spacing:.55px;color:#222">Total</div>
<div class="f" style="left:906px;top:673px;width:100px;height:24px;font-weight:bold;font-size:13px;padding:5px 0 0 1px;color:#111;letter-spacing:.6px">1562.00</div>
<div style="left:9px;top:707px;width:1170px;height:1px;background:#d2d2d2"></div>
<div style="left:9px;top:708px;width:1170px;height:23px;background:#fff;border:1px solid #c4c4c4;border-top-color:#808080;border-left-color:#808080"></div>
</body></html>
